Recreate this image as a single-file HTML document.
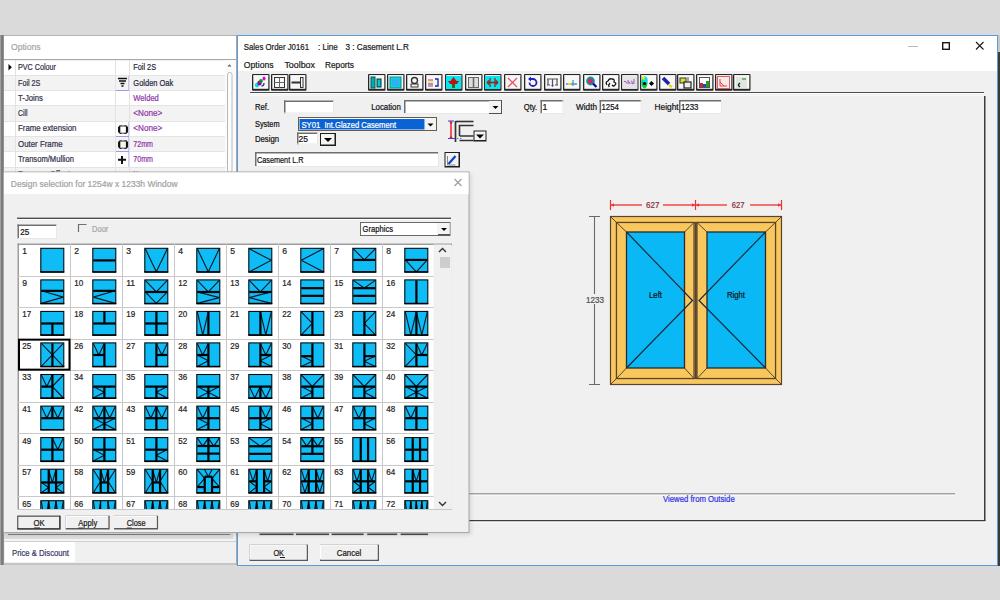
<!DOCTYPE html><html><head><meta charset="utf-8"><style>
html,body{margin:0;padding:0;width:1000px;height:600px;overflow:hidden;background:#dadada}
svg{display:block}
text{font-family:"Liberation Sans",sans-serif;white-space:pre}
</style></head><body>
<svg width="1000" height="600" viewBox="0 0 1000 600">
<defs><filter id="blur" x="-5%" y="-5%" width="110%" height="110%"><feGaussianBlur stdDeviation="2"/></filter></defs>
<rect x="0" y="0" width="1000" height="600" fill="#dadada" />
<rect x="0" y="35" width="237" height="530" fill="#f0f0f0" />
<rect x="0" y="35" width="4" height="530" fill="#a0a0a0" />
<rect x="1" y="35" width="2.5" height="530" fill="#7c7c7c" />
<rect x="4" y="35" width="233" height="1" fill="#b4b4b4" />
<rect x="4" y="36" width="232" height="24" fill="#ffffff" />
<text x="11" y="49.5" font-size="9" fill="#a6a6a6" stroke="#a6a6a6" stroke-width="0.22" textLength="29.5" lengthAdjust="spacingAndGlyphs" >Options</text>
<rect x="4" y="59" width="232" height="1" fill="#a8a8a8" />
<rect x="4" y="61" width="221" height="15" fill="#ffffff" />
<rect x="4" y="75" width="221" height="1" fill="#e4e4e4" />
<text x="18" y="70.2" font-size="8.7" fill="#33334a" stroke="#33334a" stroke-width="0.22" textLength="38" lengthAdjust="spacingAndGlyphs" >PVC Colour</text>
<text x="133.3" y="70.2" font-size="8.7" fill="#2b2b40" stroke="#2b2b40" stroke-width="0.22" textLength="22.7" lengthAdjust="spacingAndGlyphs" >Foil 2S</text>
<rect x="4" y="76" width="221" height="15" fill="#f3f3f3" />
<rect x="4" y="90" width="221" height="1" fill="#e4e4e4" />
<text x="18" y="85.5" font-size="8.7" fill="#33334a" stroke="#33334a" stroke-width="0.22" textLength="22.4" lengthAdjust="spacingAndGlyphs" >Foil 2S</text>
<text x="133.3" y="85.5" font-size="8.7" fill="#2b2b40" stroke="#2b2b40" stroke-width="0.22" textLength="40" lengthAdjust="spacingAndGlyphs" >Golden Oak</text>
<path d="M118 78.5h9M119 81h7M120.5 83.5h4M121.5 86h2" stroke="#111" stroke-width="1.5"/>
<rect x="128.5" y="76" width="1" height="15" fill="#9a9aee" />
<rect x="115" y="90" width="14" height="1" fill="#9a9aee" />
<rect x="4" y="91" width="221" height="15" fill="#ffffff" />
<rect x="4" y="105" width="221" height="1" fill="#e4e4e4" />
<text x="18" y="100.8" font-size="8.7" fill="#33334a" stroke="#33334a" stroke-width="0.22" textLength="25" lengthAdjust="spacingAndGlyphs" >T-Joins</text>
<text x="133.3" y="100.8" font-size="8.7" fill="#8f35a8" stroke="#8f35a8" stroke-width="0.22" textLength="25.5" lengthAdjust="spacingAndGlyphs" >Welded</text>
<rect x="4" y="106" width="221" height="15" fill="#f3f3f3" />
<rect x="4" y="121" width="221" height="1" fill="#e4e4e4" />
<text x="18" y="116.1" font-size="8.7" fill="#33334a" stroke="#33334a" stroke-width="0.22" textLength="9.5" lengthAdjust="spacingAndGlyphs" >Cill</text>
<text x="133.3" y="116.1" font-size="8.7" fill="#8f35a8" stroke="#8f35a8" stroke-width="0.22" textLength="29" lengthAdjust="spacingAndGlyphs" >&lt;None&gt;</text>
<rect x="4" y="122" width="221" height="15" fill="#ffffff" />
<rect x="4" y="136" width="221" height="1" fill="#e4e4e4" />
<text x="18" y="131.4" font-size="8.7" fill="#33334a" stroke="#33334a" stroke-width="0.22" textLength="58.4" lengthAdjust="spacingAndGlyphs" >Frame extension</text>
<text x="133.3" y="131.4" font-size="8.7" fill="#8f35a8" stroke="#8f35a8" stroke-width="0.22" textLength="29" lengthAdjust="spacingAndGlyphs" >&lt;None&gt;</text>
<rect x="119" y="125.8" width="8.2" height="7.6" rx="1.8" fill="none" stroke="#111" stroke-width="1.3"/><path d="M119.2 127v5.2M127 127v5.2" stroke="#111" stroke-width="2.2"/><path d="M121.5 125.8h3M121.5 133.4h3" stroke="#f4f4f4" stroke-width="0.6"/>
<rect x="128.5" y="122" width="1" height="15" fill="#9a9aee" />
<rect x="115" y="136" width="14" height="1" fill="#9a9aee" />
<rect x="4" y="137" width="221" height="15" fill="#f3f3f3" />
<rect x="4" y="151" width="221" height="1" fill="#e4e4e4" />
<text x="18" y="146.7" font-size="8.7" fill="#33334a" stroke="#33334a" stroke-width="0.22" textLength="44.7" lengthAdjust="spacingAndGlyphs" >Outer Frame</text>
<text x="133.3" y="146.7" font-size="8.7" fill="#8f35a8" stroke="#8f35a8" stroke-width="0.22" textLength="19.6" lengthAdjust="spacingAndGlyphs" >72mm</text>
<rect x="119" y="140.8" width="8.2" height="7.6" rx="1.8" fill="none" stroke="#111" stroke-width="1.3"/><path d="M119.2 142v5.2M127 142v5.2" stroke="#111" stroke-width="2.2"/><path d="M121.5 140.8h3M121.5 148.4h3" stroke="#f4f4f4" stroke-width="0.6"/>
<rect x="128.5" y="137" width="1" height="15" fill="#9a9aee" />
<rect x="115" y="151" width="14" height="1" fill="#9a9aee" />
<rect x="4" y="152" width="221" height="15" fill="#ffffff" />
<rect x="4" y="167" width="221" height="1" fill="#e4e4e4" />
<text x="18" y="162.0" font-size="8.7" fill="#33334a" stroke="#33334a" stroke-width="0.22" textLength="56" lengthAdjust="spacingAndGlyphs" >Transom/Mullion</text>
<text x="133.3" y="162.0" font-size="8.7" fill="#8f35a8" stroke="#8f35a8" stroke-width="0.22" textLength="19.6" lengthAdjust="spacingAndGlyphs" >70mm</text>
<path d="M122 156v8M118 159.8h8" stroke="#111" stroke-width="2"/>
<rect x="128.5" y="152" width="1" height="15" fill="#9a9aee" />
<rect x="4" y="168" width="221" height="15" fill="#f3f3f3" />
<rect x="4" y="182" width="221" height="1" fill="#e4e4e4" />
<text x="18" y="177.3" font-size="8.7" fill="#33334a" stroke="#33334a" stroke-width="0.22" textLength="52" lengthAdjust="spacingAndGlyphs" >Transom Offset</text>
<text x="133.3" y="177.3" font-size="8.7" fill="#8f35a8" stroke="#8f35a8" stroke-width="0.22" textLength="16" lengthAdjust="spacingAndGlyphs" >None</text>
<rect x="15" y="60" width="1" height="112" fill="#e2e2e2" />
<rect x="115" y="60" width="1" height="112" fill="#e2e2e2" />
<rect x="129" y="60" width="1" height="112" fill="#e2e2e2" />
<path d="M8.5 64L11.8 67.3L8.5 70.6Z" fill="#000"/>
<rect x="225" y="60" width="11" height="112" fill="#fbfbfb" />
<path d="M227.5 66.5h4l-2-2.2z" fill="#606060"/>
<rect x="227.5" y="72.5" width="4.5" height="100" rx="2.2" fill="#fdfdfd" stroke="#b8b8b8"/>
<rect x="4" y="533" width="229" height="9" fill="#dcdcdc" />
<rect x="8" y="534" width="222" height="1" fill="#808080" />
<rect x="4" y="539" width="229" height="2" fill="#f4f4f4" />
<rect x="4" y="541" width="233" height="1" fill="#d0d0d0" />
<rect x="5" y="542" width="70" height="20" fill="#ffffff" />
<text x="12" y="555.5" font-size="8.7" fill="#3a3a66" stroke="#3a3a66" stroke-width="0.22" textLength="57" lengthAdjust="spacingAndGlyphs" >Price &amp; Discount</text>
<rect x="4" y="563" width="233" height="2" fill="#c4c4c4" />
<rect x="236" y="35" width="1" height="530" fill="#a8a8a8" />
<rect x="237" y="35" width="761" height="531" fill="#5b9bd9" />
<rect x="238" y="36" width="759" height="529" fill="#f0f0f0" />
<rect x="238" y="36" width="759" height="35" fill="#ffffff" />
<text x="243.8" y="50" font-size="9.3" fill="#1a1a1a" stroke="#1a1a1a" stroke-width="0.22" textLength="65.2" lengthAdjust="spacingAndGlyphs" >Sales Order J0161</text>
<text x="318" y="50" font-size="9.3" fill="#1a1a1a" stroke="#1a1a1a" stroke-width="0.22" textLength="19.8" lengthAdjust="spacingAndGlyphs" >: Line</text>
<text x="345.4" y="50" font-size="9.3" fill="#1a1a1a" stroke="#1a1a1a" stroke-width="0.22" textLength="63.5" lengthAdjust="spacingAndGlyphs" >3 : Casement L.R</text>
<text x="243.8" y="68" font-size="9.3" fill="#1a1a1a" stroke="#1a1a1a" stroke-width="0.22" textLength="29.8" lengthAdjust="spacingAndGlyphs" >Options</text>
<text x="284.4" y="68" font-size="9.3" fill="#1a1a1a" stroke="#1a1a1a" stroke-width="0.22" textLength="30.6" lengthAdjust="spacingAndGlyphs" >Toolbox</text>
<text x="325" y="68" font-size="9.3" fill="#1a1a1a" stroke="#1a1a1a" stroke-width="0.22" textLength="29" lengthAdjust="spacingAndGlyphs" >Reports</text>
<rect x="908" y="46" width="10" height="1" fill="#b8b8b8" />
<rect x="942.7" y="42.7" width="6.6" height="6.6" fill="none" stroke="#1a1a1a" stroke-width="1.4"/>
<path d="M976 42L983.5 49.5M983.5 42L976 49.5" stroke="#1a1a1a" stroke-width="1.1"/>
<rect x="998" y="35" width="2" height="17" fill="#c8c8c8" />
<rect x="998" y="52" width="2" height="514" fill="#3a3a3a" />
<g transform="translate(252,74)"><rect x="0" y="0" width="17.5" height="16.8" rx="1" fill="#262626"/><rect x="1.3" y="1.3" width="15" height="13.5" fill="#f7f7f7"/><rect x="1.3" y="1.3" width="15" height="1" fill="#ffffff"/><ellipse cx="5" cy="11" rx="2.2" ry="2.6" fill="#00e0e0"/><ellipse cx="7.5" cy="9" rx="2.2" ry="2.6" fill="#a000a0"/><ellipse cx="9" cy="7" rx="1.8" ry="2" fill="#00a000"/><ellipse cx="12" cy="4.5" rx="1.5" ry="2" fill="#e000e0"/><path d="M12 9q0 3 -2.5 3" stroke="#6020c0" stroke-width="1.4" fill="none"/></g>
<g transform="translate(271,74)"><rect x="0" y="0" width="17.5" height="16.8" rx="1" fill="#262626"/><rect x="1.3" y="1.3" width="15" height="13.5" fill="#f7f7f7"/><rect x="1.3" y="1.3" width="15" height="1" fill="#ffffff"/><rect x="3.5" y="3.5" width="10" height="10" fill="none" stroke="#333"/><path d="M8.5 3.5v10M3.5 8.5h10" stroke="#666"/></g>
<g transform="translate(289,74)"><rect x="0" y="0" width="17.5" height="16.8" rx="1" fill="#262626"/><rect x="1.3" y="1.3" width="15" height="13.5" fill="#f7f7f7"/><rect x="1.3" y="1.3" width="15" height="1" fill="#ffffff"/><path d="M2.5 8.5h9" stroke="#333" stroke-width="2"/><rect x="11.5" y="3.5" width="2.5" height="10" fill="#fff" stroke="#333"/></g>
<g transform="translate(368,74)"><rect x="0" y="0" width="17.5" height="16.8" rx="1" fill="#262626"/><rect x="1.3" y="1.3" width="15" height="13.5" fill="#f7f7f7"/><rect x="1.3" y="1.3" width="15" height="1" fill="#ffffff"/><rect x="3" y="3" width="4" height="11" fill="#00b0b0" stroke="#055" stroke-width="1"/><rect x="9" y="5" width="4" height="8" fill="#00c8c8" stroke="#033"/></g>
<g transform="translate(387,74)"><rect x="0" y="0" width="17.5" height="16.8" rx="1" fill="#262626"/><rect x="1.3" y="1.3" width="15" height="13.5" fill="#f7f7f7"/><rect x="1.3" y="1.3" width="15" height="1" fill="#ffffff"/><rect x="3" y="3" width="11" height="11" fill="#10d0e0" stroke="#009090"/><rect x="5" y="5" width="7" height="7" fill="#30b0f0"/></g>
<g transform="translate(406,74)"><rect x="0" y="0" width="17.5" height="16.8" rx="1" fill="#262626"/><rect x="1.3" y="1.3" width="15" height="13.5" fill="#f7f7f7"/><rect x="1.3" y="1.3" width="15" height="1" fill="#ffffff"/><rect x="5.5" y="3.5" width="6" height="6" rx="3" fill="none" stroke="#333" stroke-width="1.4"/><rect x="5" y="10" width="7" height="3" fill="none" stroke="#333"/></g>
<g transform="translate(425,74)"><rect x="0" y="0" width="17.5" height="16.8" rx="1" fill="#262626"/><rect x="1.3" y="1.3" width="15" height="13.5" fill="#f7f7f7"/><rect x="1.3" y="1.3" width="15" height="1" fill="#ffffff"/><path d="M3 6h5" stroke="#e03030"/><path d="M3 8h5" stroke="#e0e000"/><path d="M3 10h5" stroke="#3030e0"/><path d="M3 12h5" stroke="#e03030"/><path d="M10 5h3v7h-3" stroke="#2020a0" fill="none" stroke-width="1.3"/></g>
<g transform="translate(445,74)"><rect x="0" y="0" width="17.5" height="16.8" rx="1" fill="#262626"/><rect x="1.3" y="1.3" width="15" height="13.5" fill="#f7f7f7"/><rect x="1.3" y="1.3" width="15" height="1" fill="#ffffff"/><rect x="1" y="2" width="15" height="13" fill="#00e8f0"/><path d="M8.5 3l3 4h2.5l-2 3h-2v3h-3v-3h-2l-2-3h2.5z" fill="#c01010"/><rect x="7" y="11" width="3" height="3" fill="#108010"/></g>
<g transform="translate(465,74)"><rect x="0" y="0" width="17.5" height="16.8" rx="1" fill="#262626"/><rect x="1.3" y="1.3" width="15" height="13.5" fill="#f7f7f7"/><rect x="1.3" y="1.3" width="15" height="1" fill="#ffffff"/><rect x="3.5" y="3.5" width="10" height="10" fill="#ddd" stroke="#666"/><path d="M8.5 3.5v10" stroke="#666" stroke-width="1.5"/></g>
<g transform="translate(484,74)"><rect x="0" y="0" width="17.5" height="16.8" rx="1" fill="#262626"/><rect x="1.3" y="1.3" width="15" height="13.5" fill="#f7f7f7"/><rect x="1.3" y="1.3" width="15" height="1" fill="#ffffff"/><rect x="1" y="2" width="15" height="13" fill="#00e8f0"/><path d="M6 4v9M11 4v9M3 8.5h11M3 8.5l2-2M3 8.5l2 2M14 8.5l-2-2M14 8.5l-2 2" stroke="#a02020" stroke-width="1.3" fill="none"/></g>
<g transform="translate(504,74)"><rect x="0" y="0" width="17.5" height="16.8" rx="1" fill="#262626"/><rect x="1.3" y="1.3" width="15" height="13.5" fill="#f7f7f7"/><rect x="1.3" y="1.3" width="15" height="1" fill="#ffffff"/><path d="M4 4l9 9M13 4l-9 9" stroke="#f05060" stroke-width="1.3"/></g>
<g transform="translate(524,74)"><rect x="0" y="0" width="17.5" height="16.8" rx="1" fill="#262626"/><rect x="1.3" y="1.3" width="15" height="13.5" fill="#f7f7f7"/><rect x="1.3" y="1.3" width="15" height="1" fill="#ffffff"/><path d="M6 5h3a3.5 3.5 0 1 1 -3.5 3.5" stroke="#2020c0" stroke-width="1.8" fill="none"/><path d="M4 5l3-2.5v5z" fill="#2020c0"/></g>
<g transform="translate(544,74)"><rect x="0" y="0" width="17.5" height="16.8" rx="1" fill="#262626"/><rect x="1.3" y="1.3" width="15" height="13.5" fill="#f7f7f7"/><rect x="1.3" y="1.3" width="15" height="1" fill="#ffffff"/><path d="M3 5h11M4 5v6M13 5v6M3 11h3M11 11h3M8.5 5v6" stroke="#555" stroke-width="1.2"/><path d="M7 11h3l-1.5 2z" fill="#3030e0"/></g>
<g transform="translate(563,74)"><rect x="0" y="0" width="17.5" height="16.8" rx="1" fill="#262626"/><rect x="1.3" y="1.3" width="15" height="13.5" fill="#f7f7f7"/><rect x="1.3" y="1.3" width="15" height="1" fill="#ffffff"/><path d="M3 10h11" stroke="#3070e0" stroke-width="1.2"/><path d="M10 6v6" stroke="#30a0a0" stroke-width="1.2"/><rect x="5" y="9" width="3" height="2" fill="#e0e000"/></g>
<g transform="translate(583,74)"><rect x="0" y="0" width="17.5" height="16.8" rx="1" fill="#262626"/><rect x="1.3" y="1.3" width="15" height="13.5" fill="#f7f7f7"/><rect x="1.3" y="1.3" width="15" height="1" fill="#ffffff"/><circle cx="7.5" cy="7" r="3.5" fill="#e02060" stroke="#00a0a0" stroke-width="1.8"/><path d="M10 9.5l3.5 3.5" stroke="#0000c0" stroke-width="2.2"/></g>
<g transform="translate(602,74)"><rect x="0" y="0" width="17.5" height="16.8" rx="1" fill="#262626"/><rect x="1.3" y="1.3" width="15" height="13.5" fill="#f7f7f7"/><rect x="1.3" y="1.3" width="15" height="1" fill="#ffffff"/><path d="M5 11q-2-3 1-4q1-3 4-2q3 0 2 3q3 1 1 3q-1 2-3 0M8 9q-2 2-1 4" fill="none" stroke="#111" stroke-width="1.3"/></g>
<g transform="translate(621,74)"><rect x="0" y="0" width="17.5" height="16.8" rx="1" fill="#262626"/><rect x="1.3" y="1.3" width="15" height="13.5" fill="#f7f7f7"/><rect x="1.3" y="1.3" width="15" height="1" fill="#ffffff"/><rect x="1.3" y="2.3" width="15" height="12.5" fill="#e4e4e4"/><path d="M3 8q1-2 2 0t1 1M7 6v4M7 8q2-1 2 2M10 7q2 0 1 2t2 0M13 5v5" stroke="#9a60b8" stroke-width="1" fill="none"/></g>
<g transform="translate(640,74)"><rect x="0" y="0" width="17.5" height="16.8" rx="1" fill="#262626"/><rect x="1.3" y="1.3" width="15" height="13.5" fill="#f7f7f7"/><rect x="1.3" y="1.3" width="15" height="1" fill="#ffffff"/><ellipse cx="4.5" cy="8.5" rx="3" ry="6" fill="#00d040"/><ellipse cx="5" cy="6" rx="2.6" ry="3.5" fill="#00e0f0"/><ellipse cx="3.5" cy="4" rx="1.6" ry="1.8" fill="#e8e800"/><circle cx="4.5" cy="9.5" r="1.6" fill="#000"/><path d="M11.5 7l2.5 2.5-2.5 2.5-2.5-2.5z" fill="#000"/></g>
<g transform="translate(659,74)"><rect x="0" y="0" width="17.5" height="16.8" rx="1" fill="#262626"/><rect x="1.3" y="1.3" width="15" height="13.5" fill="#f7f7f7"/><rect x="1.3" y="1.3" width="15" height="1" fill="#ffffff"/><path d="M4 4l6 6" stroke="#2020b0" stroke-width="3.5"/><path d="M10 11l3 2" stroke="#e0e000" stroke-width="2.5"/></g>
<g transform="translate(677,74)"><rect x="0" y="0" width="17.5" height="16.8" rx="1" fill="#262626"/><rect x="1.3" y="1.3" width="15" height="13.5" fill="#f7f7f7"/><rect x="1.3" y="1.3" width="15" height="1" fill="#ffffff"/><rect x="3" y="4" width="6" height="5" fill="#e0e020" stroke="#333"/><rect x="7" y="8" width="7" height="6" fill="#eee" stroke="#222" stroke-width="1.2"/><path d="M11 3v4" stroke="#555"/></g>
<g transform="translate(696,74)"><rect x="0" y="0" width="17.5" height="16.8" rx="1" fill="#262626"/><rect x="1.3" y="1.3" width="15" height="13.5" fill="#f7f7f7"/><rect x="1.3" y="1.3" width="15" height="1" fill="#ffffff"/><rect x="3.5" y="3.5" width="10" height="10" fill="#fff" stroke="#555"/><rect x="4" y="9" width="3" height="4" fill="#e02020"/><rect x="7" y="10" width="3" height="3" fill="#2040e0"/><rect x="10" y="7" width="3" height="6" fill="#20a020"/></g>
<g transform="translate(715,74)"><rect x="0" y="0" width="17.5" height="16.8" rx="1" fill="#262626"/><rect x="1.3" y="1.3" width="15" height="13.5" fill="#f7f7f7"/><rect x="1.3" y="1.3" width="15" height="1" fill="#ffffff"/><rect x="2.5" y="2.5" width="12" height="12" fill="#fbe8e8" stroke="#e06060"/><path d="M5 5v7h7M5 8l4 4" stroke="#e04040" fill="none"/></g>
<g transform="translate(733,74)"><rect x="0" y="0" width="17.5" height="16.8" rx="1" fill="#262626"/><rect x="1.3" y="1.3" width="15" height="13.5" fill="#f7f7f7"/><rect x="1.3" y="1.3" width="15" height="1" fill="#ffffff"/><rect x="3" y="3" width="11" height="11" fill="#dde8e0"/><path d="M9 5h4" stroke="#60a060" stroke-width="1.5"/><path d="M7 9q-3 2 0 4" stroke="#222" stroke-width="1.5" fill="none"/></g>
<rect x="250" y="92" width="734" height="1" fill="#4a4a4a" />
<rect x="250" y="93" width="734" height="1" fill="#ffffff" />
<rect x="250" y="95" width="734" height="1" fill="#f8f8f8" />
<rect x="984" y="96" width="1.5" height="425" fill="#3c3c3c" />
<rect x="250" y="520" width="735.5" height="1.5" fill="#3c3c3c" />
<rect x="250" y="521.5" width="736" height="1" fill="#ffffff" />
<rect x="250" y="493.5" width="705" height="1" fill="#555555" />
<rect x="250" y="494.5" width="705" height="1" fill="#ffffff" />
<text x="663.1" y="502.4" font-size="8.3" fill="#3434e8" stroke="#3434e8" stroke-width="0.22" textLength="71.6" lengthAdjust="spacingAndGlyphs" >Viewed from Outside</text>
<text x="255" y="110" font-size="8.7" fill="#111" stroke="#111" stroke-width="0.22" textLength="14" lengthAdjust="spacingAndGlyphs" >Ref.</text>
<rect x="284" y="100.5" width="50" height="13" fill="#ffffff" />
<rect x="284" y="100.5" width="50" height="1.5" fill="#6e6e6e" />
<rect x="284" y="100.5" width="1.5" height="13" fill="#6e6e6e" />
<rect x="333" y="100.5" width="1" height="13" fill="#e8e8e8" />
<rect x="284" y="112.5" width="50" height="1" fill="#e8e8e8" />
<text x="371.2" y="110" font-size="8.7" fill="#111" stroke="#111" stroke-width="0.22" textLength="29.6" lengthAdjust="spacingAndGlyphs" >Location</text>
<rect x="404" y="100" width="98" height="14" fill="#ffffff" />
<rect x="404" y="100" width="98" height="1.5" fill="#6e6e6e" />
<rect x="404" y="100" width="1.5" height="14" fill="#6e6e6e" />
<rect x="501" y="100" width="1" height="14" fill="#e8e8e8" />
<rect x="404" y="113" width="98" height="1" fill="#e8e8e8" />
<rect x="489" y="101" width="12" height="12" fill="#f4f4f4" />
<rect x="501" y="100" width="1" height="14" fill="#505050" />
<rect x="489" y="113" width="13" height="1" fill="#505050" />
<path d="M492.5 106h6l-3 3z" fill="#000"/>
<text x="523.7" y="110" font-size="8.7" fill="#111" stroke="#111" stroke-width="0.22" textLength="13.5" lengthAdjust="spacingAndGlyphs" >Qty.</text>
<rect x="540.5" y="100" width="23" height="14" fill="#ffffff" />
<rect x="540.5" y="100" width="23" height="1.5" fill="#6e6e6e" />
<rect x="540.5" y="100" width="1.5" height="14" fill="#6e6e6e" />
<rect x="562.5" y="100" width="1" height="14" fill="#e8e8e8" />
<rect x="540.5" y="113" width="23" height="1" fill="#e8e8e8" />
<text x="542.5" y="110" font-size="8.7" fill="#111" stroke="#111" stroke-width="0.22" >1</text>
<text x="576" y="110" font-size="8.7" fill="#111" stroke="#111" stroke-width="0.22" textLength="21" lengthAdjust="spacingAndGlyphs" >Width</text>
<rect x="599.6" y="100" width="42" height="14" fill="#ffffff" />
<rect x="599.6" y="100" width="42" height="1.5" fill="#6e6e6e" />
<rect x="599.6" y="100" width="1.5" height="14" fill="#6e6e6e" />
<rect x="640.6" y="100" width="1" height="14" fill="#e8e8e8" />
<rect x="599.6" y="113" width="42" height="1" fill="#e8e8e8" />
<text x="601.5" y="110" font-size="8.7" fill="#111" stroke="#111" stroke-width="0.22" textLength="17.5" lengthAdjust="spacingAndGlyphs" >1254</text>
<text x="654.6" y="110" font-size="8.7" fill="#111" stroke="#111" stroke-width="0.22" textLength="24" lengthAdjust="spacingAndGlyphs" >Height</text>
<rect x="679" y="100" width="43" height="14" fill="#ffffff" />
<rect x="679" y="100" width="43" height="1.5" fill="#6e6e6e" />
<rect x="679" y="100" width="1.5" height="14" fill="#6e6e6e" />
<rect x="721" y="100" width="1" height="14" fill="#e8e8e8" />
<rect x="679" y="113" width="43" height="1" fill="#e8e8e8" />
<text x="681" y="110" font-size="8.7" fill="#111" stroke="#111" stroke-width="0.22" textLength="17.5" lengthAdjust="spacingAndGlyphs" >1233</text>
<text x="255" y="127" font-size="8.7" fill="#111" stroke="#111" stroke-width="0.22" textLength="24.5" lengthAdjust="spacingAndGlyphs" >System</text>
<rect x="298" y="117" width="139" height="14" fill="#6a5a48" />
<rect x="299" y="118" width="137" height="12" fill="#ffffff" />
<rect x="299.5" y="119" width="125" height="10.5" fill="#0a63d4" />
<text x="301.5" y="127.8" font-size="8.7" fill="#ffffff" stroke="#ffffff" stroke-width="0.22" textLength="94.5" lengthAdjust="spacingAndGlyphs" >SY01&#160; Int.Glazed Casement</text>
<rect x="425" y="118" width="11" height="12" fill="#f4f4f4" />
<path d="M427.5 123.5h6l-3 3z" fill="#000"/>
<text x="255" y="141.5" font-size="8.7" fill="#111" stroke="#111" stroke-width="0.22" textLength="24" lengthAdjust="spacingAndGlyphs" >Design</text>
<rect x="297" y="132.5" width="21" height="12" fill="#ffffff" />
<rect x="297" y="132.5" width="21" height="1.5" fill="#6e6e6e" />
<rect x="297" y="132.5" width="1.5" height="12" fill="#6e6e6e" />
<rect x="317" y="132.5" width="1" height="12" fill="#e8e8e8" />
<rect x="297" y="143.5" width="21" height="1" fill="#e8e8e8" />
<text x="298.5" y="142" font-size="8.7" fill="#111" stroke="#111" stroke-width="0.22" textLength="9.5" lengthAdjust="spacingAndGlyphs" >25</text>
<g transform="translate(320,133)"><rect width="16" height="13" fill="#1e1e1e"/><rect x="1" y="1" width="13.5" height="10.5" fill="#f4f4f4"/><path d="M4 5h8l-4 4z" fill="#000"/></g>
<path d="M451 121.5v16.5" stroke="#f01818" stroke-width="1.4"/><circle cx="451" cy="122.5" r="1.2" fill="#f01818"/><circle cx="451" cy="137.5" r="1.2" fill="#f01818"/><path d="M448 121h6M448 138.5h6" stroke="#3a3aee" stroke-width="1"/><path d="M454 138.5h9" stroke="#6a6aee" stroke-dasharray="1.5 1.5"/><path d="M455.5 121v21" stroke="#333" stroke-width="1.7"/><path d="M455.5 121.5h18" stroke="#333" stroke-width="1.6"/><path d="M459.5 136v-10.5h14M459.5 136h14M459.5 140.5h14" stroke="#333" stroke-width="1.6" fill="none"/>
<g transform="translate(473.5,130.5)"><rect width="13" height="11" fill="#1e1e1e"/><rect x="1" y="1" width="11" height="8.5" fill="#f4f4f4"/><path d="M2.5 4h8l-4 4z" fill="#000"/></g>
<rect x="255" y="152" width="184" height="15" fill="#ffffff" />
<rect x="255" y="152" width="184" height="1.5" fill="#6e6e6e" />
<rect x="255" y="152" width="1.5" height="15" fill="#6e6e6e" />
<rect x="438" y="152" width="1" height="15" fill="#e8e8e8" />
<rect x="255" y="166" width="184" height="1" fill="#e8e8e8" />
<text x="257" y="163" font-size="8.7" fill="#111" stroke="#111" stroke-width="0.22" textLength="46.5" lengthAdjust="spacingAndGlyphs" >Casement L.R</text>
<g transform="translate(444.5,152)"><rect width="15.5" height="15.5" fill="#1e1e1e"/><rect x="1" y="1" width="13" height="13" fill="#f4f4f4"/><path d="M4 12l7-8" stroke="#1040d0" stroke-width="2.2"/><path d="M3 4v9h8" stroke="#888" fill="none"/></g>
<g>
<path d="M610.5 200v10M695.5 200v10M781.5 200v10" stroke="#f03030" stroke-width="1.2"/>
<path d="M611 205h31M663 205h32M696 205h31M750 205h31" stroke="#f04848" stroke-width="1.3"/>
<path d="M611 205l3-1.8v3.6zM695 205l-3-1.8v3.6zM696 205l3-1.8v3.6zM781 205l-3-1.8v3.6z" fill="#f03030"/>
<text x="646" y="208.2" font-size="8.7" fill="#8a3040" stroke="#8a3040" stroke-width="0.22" textLength="13.4" lengthAdjust="spacingAndGlyphs" >627</text>
<text x="731.8" y="208.2" font-size="8.7" fill="#8a3040" stroke="#8a3040" stroke-width="0.22" textLength="12.6" lengthAdjust="spacingAndGlyphs" >627</text>
<path d="M594.5 216.5v168M589 216.5h11M589 384.5h11" stroke="#6a6a6a" stroke-width="1.1"/>
<rect x="584" y="294" width="22" height="10" fill="#f0f0f0" />
<text x="586" y="303" font-size="8.7" fill="#505050" stroke="#505050" stroke-width="0.22" textLength="18" lengthAdjust="spacingAndGlyphs" >1233</text>
<rect x="610.5" y="216.5" width="171" height="168" fill="#f8c85e" stroke="#5a4430" stroke-width="1.2"/>
<rect x="616.5" y="222.5" width="159" height="156" fill="#f8c85e" stroke="#5a4430" stroke-width="1.2"/>
<path d="M610.5 216.5l6 6M781.5 216.5l-6 6M610.5 384.5l6-6M781.5 384.5l-6-6" stroke="#5a4430"/>
<rect x="616.5" y="222.5" width="77.5" height="156" fill="#f8c85e" stroke="#5a4430" stroke-width="1.2"/>
<rect x="626.5" y="232" width="58.0" height="136" fill="#0ab8f6" stroke="#2a2a2a" stroke-width="1.3"/>
<path d="M616.5 222.5L626.5 232M694 222.5L684.5 232M616.5 378.5L626.5 368M694 378.5L684.5 368" stroke="#5a4430"/>
<text x="649" y="298.4" font-size="8.7" fill="#111" stroke="#111" stroke-width="0.22" textLength="13" lengthAdjust="spacingAndGlyphs" >Left</text>
<rect x="697" y="222.5" width="78.5" height="156" fill="#f8c85e" stroke="#5a4430" stroke-width="1.2"/>
<rect x="707" y="232" width="58.5" height="136" fill="#0ab8f6" stroke="#2a2a2a" stroke-width="1.3"/>
<path d="M697 222.5L707 232M775.5 222.5L765.5 232M697 378.5L707 368M775.5 378.5L765.5 368" stroke="#5a4430"/>
<text x="727" y="298.4" font-size="8.7" fill="#111" stroke="#111" stroke-width="0.22" textLength="18" lengthAdjust="spacingAndGlyphs" >Right</text>
<path d="M626.5 232L692.5 300.5L626.5 368" stroke="#1a2a3a" stroke-width="1.2" fill="none"/>
<path d="M765.5 232L699 300.5L765.5 368" stroke="#1a2a3a" stroke-width="1.2" fill="none"/>
<rect x="694.6" y="222.5" width="2.2" height="156" fill="#5a4430" />
</g>
<rect x="249.6" y="544.6" width="58.4" height="16.4" fill="#5a5a5a" />
<rect x="249.6" y="544.6" width="56.9" height="14.899999999999999" fill="#ffffff" />
<rect x="250.6" y="545.6" width="55.9" height="13.899999999999999" fill="#f0f0f0" />
<text x="273.4" y="555.7" font-size="8.7" fill="#1a1a1a" stroke="#1a1a1a" stroke-width="0.22" textLength="10.6" lengthAdjust="spacingAndGlyphs" >OK</text>
<rect x="280" y="557" width="5" height="1" fill="#1a1a1a" />
<rect x="320" y="544.6" width="59" height="16.4" fill="#5a5a5a" />
<rect x="320" y="544.6" width="57.5" height="14.899999999999999" fill="#ffffff" />
<rect x="321" y="545.6" width="56.5" height="13.899999999999999" fill="#f0f0f0" />
<text x="336.8" y="555.7" font-size="8.7" fill="#1a1a1a" stroke="#1a1a1a" stroke-width="0.22" textLength="24.5" lengthAdjust="spacingAndGlyphs" >Cancel</text>
<rect x="259.5" y="533.5" width="34" height="1.6" fill="#4a4a4a" />
<rect x="296" y="533.5" width="33" height="1.6" fill="#4a4a4a" />
<rect x="331.6" y="533.5" width="32" height="1.6" fill="#4a4a4a" />
<rect x="367.2" y="533.5" width="30" height="1.6" fill="#4a4a4a" />
<rect x="400.6" y="533.5" width="27.5" height="1.6" fill="#4a4a4a" />
<rect x="5" y="174" width="466" height="361" fill="rgba(0,0,0,0.12)" filter="url(#blur)"/>
<rect x="3" y="171.5" width="466.5" height="361.5" fill="#a8a8a8" />
<rect x="4" y="172.5" width="464.5" height="359.5" fill="#f0f0f0" />
<rect x="4" y="172.5" width="464.5" height="21.5" fill="#ffffff" />
<text x="10.8" y="187.3" font-size="9.2" fill="#a2a2a2" stroke="#a2a2a2" stroke-width="0.22" textLength="166.8" lengthAdjust="spacingAndGlyphs" >Design selection for 1254w x 1233h Window</text>
<path d="M454.5 179L461.5 186M461.5 179L454.5 186" stroke="#a0a0a0" stroke-width="1.3"/>
<rect x="17" y="217.6" width="434" height="1.4" fill="#505050" />
<rect x="17" y="219" width="434" height="1" fill="#ffffff" />
<rect x="17.5" y="224.5" width="39.5" height="14.5" fill="#ffffff" />
<rect x="17.5" y="224.5" width="39.5" height="1.5" fill="#6e6e6e" />
<rect x="17.5" y="224.5" width="1.5" height="14.5" fill="#6e6e6e" />
<rect x="56.0" y="224.5" width="1" height="14.5" fill="#e8e8e8" />
<rect x="17.5" y="238.0" width="39.5" height="1" fill="#e8e8e8" />
<text x="20.2" y="234.6" font-size="8.7" fill="#111" stroke="#111" stroke-width="0.22" textLength="9" lengthAdjust="spacingAndGlyphs" >25</text>
<path d="M78.5 232V224.5H86.5" stroke="#707070" fill="none" stroke-width="1.2"/>
<text x="92" y="231.8" font-size="8.7" fill="#a6a6a6" stroke="#a6a6a6" stroke-width="0.22" textLength="16.4" lengthAdjust="spacingAndGlyphs" >Door</text>
<rect x="360" y="222" width="90.5" height="14" fill="#6a6a6a" />
<rect x="361" y="223" width="88.5" height="12" fill="#ffffff" />
<rect x="437" y="223" width="12.5" height="12" fill="#f4f4f4" />
<rect x="438" y="234" width="12" height="1.5" fill="#555" />
<path d="M441 228h6l-3 3z" fill="#000"/>
<text x="362.6" y="232.2" font-size="8.7" fill="#111" stroke="#111" stroke-width="0.22" textLength="30.4" lengthAdjust="spacingAndGlyphs" >Graphics</text>
<clipPath id="gclip"><rect x="17.5" y="243.5" width="434.5" height="266"/></clipPath><g clip-path="url(#gclip)">
<rect x="17.5" y="243.5" width="434.5" height="266" fill="#d8d8d8" />
<rect x="17.3" y="243.3" width="434.7" height="1.6" fill="#8a8a8a" />
<rect x="17.3" y="243.3" width="1.6" height="266.2" fill="#8a8a8a" />
<rect x="18.9" y="244.9" width="432.6" height="264.6" fill="#ffffff" />
<text x="22.2" y="254.2" font-size="9.2" fill="#1e1e1e" stroke="#1e1e1e" stroke-width="0.22" textLength="4.8" lengthAdjust="spacingAndGlyphs" >1</text>
<g transform="translate(40.3,247.8)"><rect x="0.5" y="0.5" width="23" height="23.5" fill="#0ebdf6" stroke="#000" stroke-width="1.05"/><rect x="0" y="23.5" width="24" height="1.5" fill="#000"/></g>
<text x="74.2" y="254.2" font-size="9.2" fill="#1e1e1e" stroke="#1e1e1e" stroke-width="0.22" textLength="4.8" lengthAdjust="spacingAndGlyphs" >2</text>
<g transform="translate(92.3,247.8)"><rect x="0.5" y="0.5" width="23" height="23.5" fill="#0ebdf6" stroke="#000" stroke-width="1.05"/><rect x="1.00" y="11.50" width="22.00" height="2.2" fill="#000"/><rect x="0" y="23.5" width="24" height="1.5" fill="#000"/></g>
<text x="126.2" y="254.2" font-size="9.2" fill="#1e1e1e" stroke="#1e1e1e" stroke-width="0.22" textLength="4.8" lengthAdjust="spacingAndGlyphs" >3</text>
<g transform="translate(144.3,247.8)"><rect x="0.5" y="0.5" width="23" height="23.5" fill="#0ebdf6" stroke="#000" stroke-width="1.05"/><path d="M1.00 1.00L12.00 24.00M23.00 1.00L12.00 24.00" stroke="#0a1a2a" stroke-width="1.15" fill="none"/><rect x="0" y="23.5" width="24" height="1.5" fill="#000"/></g>
<text x="178.2" y="254.2" font-size="9.2" fill="#1e1e1e" stroke="#1e1e1e" stroke-width="0.22" textLength="4.8" lengthAdjust="spacingAndGlyphs" >4</text>
<g transform="translate(196.3,247.8)"><rect x="0.5" y="0.5" width="23" height="23.5" fill="#0ebdf6" stroke="#000" stroke-width="1.05"/><path d="M1.00 1.00L12.00 24.00M23.00 1.00L12.00 24.00" stroke="#0a1a2a" stroke-width="1.15" fill="none"/><rect x="0" y="23.5" width="24" height="1.5" fill="#000"/></g>
<text x="230.2" y="254.2" font-size="9.2" fill="#1e1e1e" stroke="#1e1e1e" stroke-width="0.22" textLength="4.8" lengthAdjust="spacingAndGlyphs" >5</text>
<g transform="translate(248.3,247.8)"><rect x="0.5" y="0.5" width="23" height="23.5" fill="#0ebdf6" stroke="#000" stroke-width="1.05"/><path d="M1.00 1.00L23.00 12.50M1.00 24.00L23.00 12.50" stroke="#0a1a2a" stroke-width="1.15" fill="none"/><rect x="0" y="23.5" width="24" height="1.5" fill="#000"/></g>
<text x="282.2" y="254.2" font-size="9.2" fill="#1e1e1e" stroke="#1e1e1e" stroke-width="0.22" textLength="4.8" lengthAdjust="spacingAndGlyphs" >6</text>
<g transform="translate(300.3,247.8)"><rect x="0.5" y="0.5" width="23" height="23.5" fill="#0ebdf6" stroke="#000" stroke-width="1.05"/><path d="M23.00 1.00L1.00 12.50M23.00 24.00L1.00 12.50" stroke="#0a1a2a" stroke-width="1.15" fill="none"/><rect x="0" y="23.5" width="24" height="1.5" fill="#000"/></g>
<text x="334.2" y="254.2" font-size="9.2" fill="#1e1e1e" stroke="#1e1e1e" stroke-width="0.22" textLength="4.8" lengthAdjust="spacingAndGlyphs" >7</text>
<g transform="translate(352.3,247.8)"><rect x="0.5" y="0.5" width="23" height="23.5" fill="#0ebdf6" stroke="#000" stroke-width="1.05"/><path d="M1.00 1.00L12.00 12.04M23.00 1.00L12.00 12.04" stroke="#0a1a2a" stroke-width="1.15" fill="none"/><rect x="1.00" y="11.04" width="22.00" height="2.2" fill="#000"/><rect x="0" y="23.5" width="24" height="1.5" fill="#000"/></g>
<text x="386.2" y="254.2" font-size="9.2" fill="#1e1e1e" stroke="#1e1e1e" stroke-width="0.22" textLength="4.8" lengthAdjust="spacingAndGlyphs" >8</text>
<g transform="translate(404.3,247.8)"><rect x="0.5" y="0.5" width="23" height="23.5" fill="#0ebdf6" stroke="#000" stroke-width="1.05"/><path d="M1.00 12.04L12.00 24.00M23.00 12.04L12.00 24.00" stroke="#0a1a2a" stroke-width="1.15" fill="none"/><rect x="1.00" y="11.04" width="22.00" height="2.2" fill="#000"/><rect x="0" y="23.5" width="24" height="1.5" fill="#000"/></g>
<text x="22.2" y="285.8" font-size="9.2" fill="#1e1e1e" stroke="#1e1e1e" stroke-width="0.22" textLength="4.8" lengthAdjust="spacingAndGlyphs" >9</text>
<g transform="translate(40.3,279.4)"><rect x="0.5" y="0.5" width="23" height="23.5" fill="#0ebdf6" stroke="#000" stroke-width="1.05"/><path d="M1.00 11.35L23.00 17.68M1.00 24.00L23.00 17.68" stroke="#0a1a2a" stroke-width="1.15" fill="none"/><rect x="1.00" y="10.35" width="22.00" height="2.2" fill="#000"/><rect x="0" y="23.5" width="24" height="1.5" fill="#000"/></g>
<text x="74.2" y="285.8" font-size="9.2" fill="#1e1e1e" stroke="#1e1e1e" stroke-width="0.22" textLength="9.0" lengthAdjust="spacingAndGlyphs" >10</text>
<g transform="translate(92.3,279.4)"><rect x="0.5" y="0.5" width="23" height="23.5" fill="#0ebdf6" stroke="#000" stroke-width="1.05"/><path d="M23.00 11.35L1.00 17.68M23.00 24.00L1.00 17.68" stroke="#0a1a2a" stroke-width="1.15" fill="none"/><rect x="1.00" y="10.35" width="22.00" height="2.2" fill="#000"/><rect x="0" y="23.5" width="24" height="1.5" fill="#000"/></g>
<text x="126.2" y="285.8" font-size="9.2" fill="#1e1e1e" stroke="#1e1e1e" stroke-width="0.22" textLength="9.0" lengthAdjust="spacingAndGlyphs" >11</text>
<g transform="translate(144.3,279.4)"><rect x="0.5" y="0.5" width="23" height="23.5" fill="#0ebdf6" stroke="#000" stroke-width="1.05"/><path d="M1.00 1.00L12.00 12.50M23.00 1.00L12.00 12.50M1.00 12.50L12.00 24.00M23.00 12.50L12.00 24.00" stroke="#0a1a2a" stroke-width="1.15" fill="none"/><rect x="1.00" y="11.50" width="22.00" height="2.2" fill="#000"/><rect x="0" y="23.5" width="24" height="1.5" fill="#000"/></g>
<text x="178.2" y="285.8" font-size="9.2" fill="#1e1e1e" stroke="#1e1e1e" stroke-width="0.22" textLength="9.0" lengthAdjust="spacingAndGlyphs" >12</text>
<g transform="translate(196.3,279.4)"><rect x="0.5" y="0.5" width="23" height="23.5" fill="#0ebdf6" stroke="#000" stroke-width="1.05"/><path d="M1.00 1.00L12.00 12.50M23.00 1.00L12.00 12.50M1.00 12.50L23.00 18.25M1.00 24.00L23.00 18.25" stroke="#0a1a2a" stroke-width="1.15" fill="none"/><rect x="1.00" y="11.50" width="22.00" height="2.2" fill="#000"/><rect x="0" y="23.5" width="24" height="1.5" fill="#000"/></g>
<text x="230.2" y="285.8" font-size="9.2" fill="#1e1e1e" stroke="#1e1e1e" stroke-width="0.22" textLength="9.0" lengthAdjust="spacingAndGlyphs" >13</text>
<g transform="translate(248.3,279.4)"><rect x="0.5" y="0.5" width="23" height="23.5" fill="#0ebdf6" stroke="#000" stroke-width="1.05"/><path d="M1.00 1.00L12.00 12.50M23.00 1.00L12.00 12.50M23.00 12.50L1.00 18.25M23.00 24.00L1.00 18.25" stroke="#0a1a2a" stroke-width="1.15" fill="none"/><rect x="1.00" y="11.50" width="22.00" height="2.2" fill="#000"/><rect x="0" y="23.5" width="24" height="1.5" fill="#000"/></g>
<text x="282.2" y="285.8" font-size="9.2" fill="#1e1e1e" stroke="#1e1e1e" stroke-width="0.22" textLength="9.0" lengthAdjust="spacingAndGlyphs" >14</text>
<g transform="translate(300.3,279.4)"><rect x="0.5" y="0.5" width="23" height="23.5" fill="#0ebdf6" stroke="#000" stroke-width="1.05"/><rect x="1.00" y="7.67" width="22.00" height="2.2" fill="#000"/><rect x="1.00" y="15.33" width="22.00" height="2.2" fill="#000"/><rect x="0" y="23.5" width="24" height="1.5" fill="#000"/></g>
<text x="334.2" y="285.8" font-size="9.2" fill="#1e1e1e" stroke="#1e1e1e" stroke-width="0.22" textLength="9.0" lengthAdjust="spacingAndGlyphs" >15</text>
<g transform="translate(352.3,279.4)"><rect x="0.5" y="0.5" width="23" height="23.5" fill="#0ebdf6" stroke="#000" stroke-width="1.05"/><path d="M1.00 1.00L12.00 8.67M23.00 1.00L12.00 8.67" stroke="#0a1a2a" stroke-width="1.15" fill="none"/><rect x="1.00" y="7.67" width="22.00" height="2.2" fill="#000"/><rect x="1.00" y="15.33" width="22.00" height="2.2" fill="#000"/><rect x="0" y="23.5" width="24" height="1.5" fill="#000"/></g>
<text x="386.2" y="285.8" font-size="9.2" fill="#1e1e1e" stroke="#1e1e1e" stroke-width="0.22" textLength="9.0" lengthAdjust="spacingAndGlyphs" >16</text>
<g transform="translate(404.3,279.4)"><rect x="0.5" y="0.5" width="23" height="23.5" fill="#0ebdf6" stroke="#000" stroke-width="1.05"/><rect x="11.00" y="1.00" width="2.2" height="23.00" fill="#000"/><rect x="0" y="23.5" width="24" height="1.5" fill="#000"/></g>
<text x="22.2" y="317.3" font-size="9.2" fill="#1e1e1e" stroke="#1e1e1e" stroke-width="0.22" textLength="9.0" lengthAdjust="spacingAndGlyphs" >17</text>
<g transform="translate(40.3,310.9)"><rect x="0.5" y="0.5" width="23" height="23.5" fill="#0ebdf6" stroke="#000" stroke-width="1.05"/><rect x="1.00" y="11.50" width="22.00" height="2.2" fill="#000"/><rect x="11.00" y="12.50" width="2.2" height="11.50" fill="#000"/><rect x="0" y="23.5" width="24" height="1.5" fill="#000"/></g>
<text x="74.2" y="317.3" font-size="9.2" fill="#1e1e1e" stroke="#1e1e1e" stroke-width="0.22" textLength="9.0" lengthAdjust="spacingAndGlyphs" >18</text>
<g transform="translate(92.3,310.9)"><rect x="0.5" y="0.5" width="23" height="23.5" fill="#0ebdf6" stroke="#000" stroke-width="1.05"/><rect x="1.00" y="11.50" width="22.00" height="2.2" fill="#000"/><rect x="11.00" y="1.00" width="2.2" height="11.50" fill="#000"/><rect x="0" y="23.5" width="24" height="1.5" fill="#000"/></g>
<text x="126.2" y="317.3" font-size="9.2" fill="#1e1e1e" stroke="#1e1e1e" stroke-width="0.22" textLength="9.0" lengthAdjust="spacingAndGlyphs" >19</text>
<g transform="translate(144.3,310.9)"><rect x="0.5" y="0.5" width="23" height="23.5" fill="#0ebdf6" stroke="#000" stroke-width="1.05"/><rect x="1.00" y="11.50" width="22.00" height="2.2" fill="#000"/><rect x="11.00" y="1.00" width="2.2" height="23.00" fill="#000"/><rect x="0" y="23.5" width="24" height="1.5" fill="#000"/></g>
<text x="178.2" y="317.3" font-size="9.2" fill="#1e1e1e" stroke="#1e1e1e" stroke-width="0.22" textLength="9.0" lengthAdjust="spacingAndGlyphs" >20</text>
<g transform="translate(196.3,310.9)"><rect x="0.5" y="0.5" width="23" height="23.5" fill="#0ebdf6" stroke="#000" stroke-width="1.05"/><path d="M1.00 1.00L6.50 24.00M12.00 1.00L6.50 24.00" stroke="#0a1a2a" stroke-width="1.15" fill="none"/><rect x="11.00" y="1.00" width="2.2" height="23.00" fill="#000"/><rect x="0" y="23.5" width="24" height="1.5" fill="#000"/></g>
<text x="230.2" y="317.3" font-size="9.2" fill="#1e1e1e" stroke="#1e1e1e" stroke-width="0.22" textLength="9.0" lengthAdjust="spacingAndGlyphs" >21</text>
<g transform="translate(248.3,310.9)"><rect x="0.5" y="0.5" width="23" height="23.5" fill="#0ebdf6" stroke="#000" stroke-width="1.05"/><path d="M12.00 1.00L17.50 24.00M23.00 1.00L17.50 24.00" stroke="#0a1a2a" stroke-width="1.15" fill="none"/><rect x="11.00" y="1.00" width="2.2" height="23.00" fill="#000"/><rect x="0" y="23.5" width="24" height="1.5" fill="#000"/></g>
<text x="282.2" y="317.3" font-size="9.2" fill="#1e1e1e" stroke="#1e1e1e" stroke-width="0.22" textLength="9.0" lengthAdjust="spacingAndGlyphs" >22</text>
<g transform="translate(300.3,310.9)"><rect x="0.5" y="0.5" width="23" height="23.5" fill="#0ebdf6" stroke="#000" stroke-width="1.05"/><path d="M1.00 1.00L12.00 12.50M1.00 24.00L12.00 12.50" stroke="#0a1a2a" stroke-width="1.15" fill="none"/><rect x="11.00" y="1.00" width="2.2" height="23.00" fill="#000"/><rect x="0" y="23.5" width="24" height="1.5" fill="#000"/></g>
<text x="334.2" y="317.3" font-size="9.2" fill="#1e1e1e" stroke="#1e1e1e" stroke-width="0.22" textLength="9.0" lengthAdjust="spacingAndGlyphs" >23</text>
<g transform="translate(352.3,310.9)"><rect x="0.5" y="0.5" width="23" height="23.5" fill="#0ebdf6" stroke="#000" stroke-width="1.05"/><path d="M23.00 1.00L12.00 12.50M23.00 24.00L12.00 12.50" stroke="#0a1a2a" stroke-width="1.15" fill="none"/><rect x="11.00" y="1.00" width="2.2" height="23.00" fill="#000"/><rect x="0" y="23.5" width="24" height="1.5" fill="#000"/></g>
<text x="386.2" y="317.3" font-size="9.2" fill="#1e1e1e" stroke="#1e1e1e" stroke-width="0.22" textLength="9.0" lengthAdjust="spacingAndGlyphs" >24</text>
<g transform="translate(404.3,310.9)"><rect x="0.5" y="0.5" width="23" height="23.5" fill="#0ebdf6" stroke="#000" stroke-width="1.05"/><path d="M1.00 1.00L6.50 24.00M12.00 1.00L6.50 24.00M12.00 1.00L17.50 24.00M23.00 1.00L17.50 24.00" stroke="#0a1a2a" stroke-width="1.15" fill="none"/><rect x="11.00" y="1.00" width="2.2" height="23.00" fill="#000"/><rect x="0" y="23.5" width="24" height="1.5" fill="#000"/></g>
<text x="22.2" y="348.8" font-size="9.2" fill="#1e1e1e" stroke="#1e1e1e" stroke-width="0.22" textLength="9.0" lengthAdjust="spacingAndGlyphs" >25</text>
<g transform="translate(40.3,342.4)"><rect x="0.5" y="0.5" width="23" height="23.5" fill="#0ebdf6" stroke="#000" stroke-width="1.05"/><path d="M1.00 1.00L12.00 12.50M1.00 24.00L12.00 12.50M23.00 1.00L12.00 12.50M23.00 24.00L12.00 12.50" stroke="#0a1a2a" stroke-width="1.15" fill="none"/><rect x="11.00" y="1.00" width="2.2" height="23.00" fill="#000"/><rect x="0" y="23.5" width="24" height="1.5" fill="#000"/></g>
<text x="74.2" y="348.8" font-size="9.2" fill="#1e1e1e" stroke="#1e1e1e" stroke-width="0.22" textLength="9.0" lengthAdjust="spacingAndGlyphs" >26</text>
<g transform="translate(92.3,342.4)"><rect x="0.5" y="0.5" width="23" height="23.5" fill="#0ebdf6" stroke="#000" stroke-width="1.05"/><path d="M1.00 1.00L6.50 12.50M12.00 1.00L6.50 12.50" stroke="#0a1a2a" stroke-width="1.15" fill="none"/><rect x="11.00" y="1.00" width="2.2" height="23.00" fill="#000"/><rect x="1.00" y="11.50" width="11.00" height="2.2" fill="#000"/><rect x="0" y="23.5" width="24" height="1.5" fill="#000"/></g>
<text x="126.2" y="348.8" font-size="9.2" fill="#1e1e1e" stroke="#1e1e1e" stroke-width="0.22" textLength="9.0" lengthAdjust="spacingAndGlyphs" >27</text>
<g transform="translate(144.3,342.4)"><rect x="0.5" y="0.5" width="23" height="23.5" fill="#0ebdf6" stroke="#000" stroke-width="1.05"/><path d="M12.00 1.00L17.50 12.50M23.00 1.00L17.50 12.50" stroke="#0a1a2a" stroke-width="1.15" fill="none"/><rect x="11.00" y="1.00" width="2.2" height="23.00" fill="#000"/><rect x="12.00" y="11.50" width="11.00" height="2.2" fill="#000"/><rect x="0" y="23.5" width="24" height="1.5" fill="#000"/></g>
<text x="178.2" y="348.8" font-size="9.2" fill="#1e1e1e" stroke="#1e1e1e" stroke-width="0.22" textLength="9.0" lengthAdjust="spacingAndGlyphs" >28</text>
<g transform="translate(196.3,342.4)"><rect x="0.5" y="0.5" width="23" height="23.5" fill="#0ebdf6" stroke="#000" stroke-width="1.05"/><path d="M1.00 1.00L6.50 12.50M12.00 1.00L6.50 12.50M1.00 12.50L12.00 18.25M1.00 24.00L12.00 18.25" stroke="#0a1a2a" stroke-width="1.15" fill="none"/><rect x="11.00" y="1.00" width="2.2" height="23.00" fill="#000"/><rect x="1.00" y="11.50" width="11.00" height="2.2" fill="#000"/><rect x="0" y="23.5" width="24" height="1.5" fill="#000"/></g>
<text x="230.2" y="348.8" font-size="9.2" fill="#1e1e1e" stroke="#1e1e1e" stroke-width="0.22" textLength="9.0" lengthAdjust="spacingAndGlyphs" >29</text>
<g transform="translate(248.3,342.4)"><rect x="0.5" y="0.5" width="23" height="23.5" fill="#0ebdf6" stroke="#000" stroke-width="1.05"/><path d="M12.00 1.00L17.50 12.50M23.00 1.00L17.50 12.50M23.00 12.50L12.00 18.25M23.00 24.00L12.00 18.25" stroke="#0a1a2a" stroke-width="1.15" fill="none"/><rect x="11.00" y="1.00" width="2.2" height="23.00" fill="#000"/><rect x="12.00" y="11.50" width="11.00" height="2.2" fill="#000"/><rect x="0" y="23.5" width="24" height="1.5" fill="#000"/></g>
<text x="282.2" y="348.8" font-size="9.2" fill="#1e1e1e" stroke="#1e1e1e" stroke-width="0.22" textLength="9.0" lengthAdjust="spacingAndGlyphs" >30</text>
<g transform="translate(300.3,342.4)"><rect x="0.5" y="0.5" width="23" height="23.5" fill="#0ebdf6" stroke="#000" stroke-width="1.05"/><path d="M1.00 13.65L12.00 18.82M1.00 24.00L12.00 18.82" stroke="#0a1a2a" stroke-width="1.15" fill="none"/><rect x="11.00" y="1.00" width="2.2" height="23.00" fill="#000"/><rect x="1.00" y="12.65" width="11.00" height="2.2" fill="#000"/><rect x="0" y="23.5" width="24" height="1.5" fill="#000"/></g>
<text x="334.2" y="348.8" font-size="9.2" fill="#1e1e1e" stroke="#1e1e1e" stroke-width="0.22" textLength="9.0" lengthAdjust="spacingAndGlyphs" >31</text>
<g transform="translate(352.3,342.4)"><rect x="0.5" y="0.5" width="23" height="23.5" fill="#0ebdf6" stroke="#000" stroke-width="1.05"/><path d="M23.00 13.65L12.00 18.82M23.00 24.00L12.00 18.82" stroke="#0a1a2a" stroke-width="1.15" fill="none"/><rect x="11.00" y="1.00" width="2.2" height="23.00" fill="#000"/><rect x="12.00" y="12.65" width="11.00" height="2.2" fill="#000"/><rect x="0" y="23.5" width="24" height="1.5" fill="#000"/></g>
<text x="386.2" y="348.8" font-size="9.2" fill="#1e1e1e" stroke="#1e1e1e" stroke-width="0.22" textLength="9.0" lengthAdjust="spacingAndGlyphs" >32</text>
<g transform="translate(404.3,342.4)"><rect x="0.5" y="0.5" width="23" height="23.5" fill="#0ebdf6" stroke="#000" stroke-width="1.05"/><path d="M1.00 1.00L12.00 12.50M1.00 24.00L12.00 12.50M12.00 1.00L17.50 12.50M23.00 1.00L17.50 12.50" stroke="#0a1a2a" stroke-width="1.15" fill="none"/><rect x="11.00" y="1.00" width="2.2" height="23.00" fill="#000"/><rect x="12.00" y="11.50" width="11.00" height="2.2" fill="#000"/><rect x="0" y="23.5" width="24" height="1.5" fill="#000"/></g>
<text x="22.2" y="380.4" font-size="9.2" fill="#1e1e1e" stroke="#1e1e1e" stroke-width="0.22" textLength="9.0" lengthAdjust="spacingAndGlyphs" >33</text>
<g transform="translate(40.3,374.0)"><rect x="0.5" y="0.5" width="23" height="23.5" fill="#0ebdf6" stroke="#000" stroke-width="1.05"/><path d="M1.00 1.00L6.50 12.50M12.00 1.00L6.50 12.50M23.00 1.00L12.00 12.50M23.00 24.00L12.00 12.50" stroke="#0a1a2a" stroke-width="1.15" fill="none"/><rect x="11.00" y="1.00" width="2.2" height="23.00" fill="#000"/><rect x="1.00" y="11.50" width="11.00" height="2.2" fill="#000"/><rect x="0" y="23.5" width="24" height="1.5" fill="#000"/></g>
<text x="74.2" y="380.4" font-size="9.2" fill="#1e1e1e" stroke="#1e1e1e" stroke-width="0.22" textLength="9.0" lengthAdjust="spacingAndGlyphs" >34</text>
<g transform="translate(92.3,374.0)"><rect x="0.5" y="0.5" width="23" height="23.5" fill="#0ebdf6" stroke="#000" stroke-width="1.05"/><path d="M1.00 12.50L12.00 18.25M1.00 24.00L12.00 18.25" stroke="#0a1a2a" stroke-width="1.15" fill="none"/><rect x="1.00" y="11.50" width="22.00" height="2.2" fill="#000"/><rect x="11.00" y="12.50" width="2.2" height="11.50" fill="#000"/><rect x="0" y="23.5" width="24" height="1.5" fill="#000"/></g>
<text x="126.2" y="380.4" font-size="9.2" fill="#1e1e1e" stroke="#1e1e1e" stroke-width="0.22" textLength="9.0" lengthAdjust="spacingAndGlyphs" >35</text>
<g transform="translate(144.3,374.0)"><rect x="0.5" y="0.5" width="23" height="23.5" fill="#0ebdf6" stroke="#000" stroke-width="1.05"/><path d="M23.00 12.50L12.00 18.25M23.00 24.00L12.00 18.25" stroke="#0a1a2a" stroke-width="1.15" fill="none"/><rect x="1.00" y="11.50" width="22.00" height="2.2" fill="#000"/><rect x="11.00" y="12.50" width="2.2" height="11.50" fill="#000"/><rect x="0" y="23.5" width="24" height="1.5" fill="#000"/></g>
<text x="178.2" y="380.4" font-size="9.2" fill="#1e1e1e" stroke="#1e1e1e" stroke-width="0.22" textLength="9.0" lengthAdjust="spacingAndGlyphs" >36</text>
<g transform="translate(196.3,374.0)"><rect x="0.5" y="0.5" width="23" height="23.5" fill="#0ebdf6" stroke="#000" stroke-width="1.05"/><path d="M1.00 12.50L12.00 18.25M1.00 24.00L12.00 18.25M23.00 12.50L12.00 18.25M23.00 24.00L12.00 18.25" stroke="#0a1a2a" stroke-width="1.15" fill="none"/><rect x="1.00" y="11.50" width="22.00" height="2.2" fill="#000"/><rect x="11.00" y="12.50" width="2.2" height="11.50" fill="#000"/><rect x="0" y="23.5" width="24" height="1.5" fill="#000"/></g>
<text x="230.2" y="380.4" font-size="9.2" fill="#1e1e1e" stroke="#1e1e1e" stroke-width="0.22" textLength="9.0" lengthAdjust="spacingAndGlyphs" >37</text>
<g transform="translate(248.3,374.0)"><rect x="0.5" y="0.5" width="23" height="23.5" fill="#0ebdf6" stroke="#000" stroke-width="1.05"/><path d="M1.00 12.50L6.50 24.00M12.00 12.50L6.50 24.00M12.00 12.50L17.50 24.00M23.00 12.50L17.50 24.00" stroke="#0a1a2a" stroke-width="1.15" fill="none"/><rect x="1.00" y="11.50" width="22.00" height="2.2" fill="#000"/><rect x="11.00" y="12.50" width="2.2" height="11.50" fill="#000"/><rect x="0" y="23.5" width="24" height="1.5" fill="#000"/></g>
<text x="282.2" y="380.4" font-size="9.2" fill="#1e1e1e" stroke="#1e1e1e" stroke-width="0.22" textLength="9.0" lengthAdjust="spacingAndGlyphs" >38</text>
<g transform="translate(300.3,374.0)"><rect x="0.5" y="0.5" width="23" height="23.5" fill="#0ebdf6" stroke="#000" stroke-width="1.05"/><path d="M1.00 1.00L12.00 12.50M23.00 1.00L12.00 12.50M1.00 12.50L12.00 18.25M1.00 24.00L12.00 18.25" stroke="#0a1a2a" stroke-width="1.15" fill="none"/><rect x="1.00" y="11.50" width="22.00" height="2.2" fill="#000"/><rect x="11.00" y="12.50" width="2.2" height="11.50" fill="#000"/><rect x="0" y="23.5" width="24" height="1.5" fill="#000"/></g>
<text x="334.2" y="380.4" font-size="9.2" fill="#1e1e1e" stroke="#1e1e1e" stroke-width="0.22" textLength="9.0" lengthAdjust="spacingAndGlyphs" >39</text>
<g transform="translate(352.3,374.0)"><rect x="0.5" y="0.5" width="23" height="23.5" fill="#0ebdf6" stroke="#000" stroke-width="1.05"/><path d="M1.00 1.00L12.00 12.50M23.00 1.00L12.00 12.50M23.00 12.50L12.00 18.25M23.00 24.00L12.00 18.25" stroke="#0a1a2a" stroke-width="1.15" fill="none"/><rect x="1.00" y="11.50" width="22.00" height="2.2" fill="#000"/><rect x="11.00" y="12.50" width="2.2" height="11.50" fill="#000"/><rect x="0" y="23.5" width="24" height="1.5" fill="#000"/></g>
<text x="386.2" y="380.4" font-size="9.2" fill="#1e1e1e" stroke="#1e1e1e" stroke-width="0.22" textLength="9.0" lengthAdjust="spacingAndGlyphs" >40</text>
<g transform="translate(404.3,374.0)"><rect x="0.5" y="0.5" width="23" height="23.5" fill="#0ebdf6" stroke="#000" stroke-width="1.05"/><path d="M1.00 1.00L12.00 12.50M23.00 1.00L12.00 12.50M1.00 12.50L12.00 18.25M1.00 24.00L12.00 18.25M23.00 12.50L12.00 18.25M23.00 24.00L12.00 18.25" stroke="#0a1a2a" stroke-width="1.15" fill="none"/><rect x="1.00" y="11.50" width="22.00" height="2.2" fill="#000"/><rect x="11.00" y="12.50" width="2.2" height="11.50" fill="#000"/><rect x="0" y="23.5" width="24" height="1.5" fill="#000"/></g>
<text x="22.2" y="411.9" font-size="9.2" fill="#1e1e1e" stroke="#1e1e1e" stroke-width="0.22" textLength="9.0" lengthAdjust="spacingAndGlyphs" >41</text>
<g transform="translate(40.3,405.6)"><rect x="0.5" y="0.5" width="23" height="23.5" fill="#0ebdf6" stroke="#000" stroke-width="1.05"/><path d="M1.00 1.00L6.50 12.50M12.00 1.00L6.50 12.50M12.00 1.00L17.50 12.50M23.00 1.00L17.50 12.50" stroke="#0a1a2a" stroke-width="1.15" fill="none"/><rect x="1.00" y="11.50" width="22.00" height="2.2" fill="#000"/><rect x="11.00" y="1.00" width="2.2" height="11.50" fill="#000"/><rect x="0" y="23.5" width="24" height="1.5" fill="#000"/></g>
<text x="74.2" y="411.9" font-size="9.2" fill="#1e1e1e" stroke="#1e1e1e" stroke-width="0.22" textLength="9.0" lengthAdjust="spacingAndGlyphs" >42</text>
<g transform="translate(92.3,405.6)"><rect x="0.5" y="0.5" width="23" height="23.5" fill="#0ebdf6" stroke="#000" stroke-width="1.05"/><path d="M1.00 1.00L6.50 12.50M12.00 1.00L6.50 12.50M12.00 1.00L17.50 12.50M23.00 1.00L17.50 12.50M1.00 12.50L12.00 18.25M1.00 24.00L12.00 18.25M23.00 12.50L12.00 18.25M23.00 24.00L12.00 18.25" stroke="#0a1a2a" stroke-width="1.15" fill="none"/><rect x="1.00" y="11.50" width="22.00" height="2.2" fill="#000"/><rect x="11.00" y="1.00" width="2.2" height="23.00" fill="#000"/><rect x="0" y="23.5" width="24" height="1.5" fill="#000"/></g>
<text x="126.2" y="411.9" font-size="9.2" fill="#1e1e1e" stroke="#1e1e1e" stroke-width="0.22" textLength="9.0" lengthAdjust="spacingAndGlyphs" >43</text>
<g transform="translate(144.3,405.6)"><rect x="0.5" y="0.5" width="23" height="23.5" fill="#0ebdf6" stroke="#000" stroke-width="1.05"/><path d="M1.00 1.00L6.50 12.50M12.00 1.00L6.50 12.50M12.00 1.00L17.50 12.50M23.00 1.00L17.50 12.50" stroke="#0a1a2a" stroke-width="1.15" fill="none"/><rect x="1.00" y="11.50" width="22.00" height="2.2" fill="#000"/><rect x="11.00" y="1.00" width="2.2" height="23.00" fill="#000"/><rect x="0" y="23.5" width="24" height="1.5" fill="#000"/></g>
<text x="178.2" y="411.9" font-size="9.2" fill="#1e1e1e" stroke="#1e1e1e" stroke-width="0.22" textLength="9.0" lengthAdjust="spacingAndGlyphs" >44</text>
<g transform="translate(196.3,405.6)"><rect x="0.5" y="0.5" width="23" height="23.5" fill="#0ebdf6" stroke="#000" stroke-width="1.05"/><path d="M1.00 1.00L6.50 12.50M12.00 1.00L6.50 12.50M1.00 12.50L12.00 18.25M1.00 24.00L12.00 18.25" stroke="#0a1a2a" stroke-width="1.15" fill="none"/><rect x="1.00" y="11.50" width="22.00" height="2.2" fill="#000"/><rect x="11.00" y="1.00" width="2.2" height="23.00" fill="#000"/><rect x="0" y="23.5" width="24" height="1.5" fill="#000"/></g>
<text x="230.2" y="411.9" font-size="9.2" fill="#1e1e1e" stroke="#1e1e1e" stroke-width="0.22" textLength="9.0" lengthAdjust="spacingAndGlyphs" >45</text>
<g transform="translate(248.3,405.6)"><rect x="0.5" y="0.5" width="23" height="23.5" fill="#0ebdf6" stroke="#000" stroke-width="1.05"/><path d="M12.00 1.00L17.50 12.50M23.00 1.00L17.50 12.50M23.00 12.50L12.00 18.25M23.00 24.00L12.00 18.25" stroke="#0a1a2a" stroke-width="1.15" fill="none"/><rect x="1.00" y="11.50" width="22.00" height="2.2" fill="#000"/><rect x="11.00" y="1.00" width="2.2" height="23.00" fill="#000"/><rect x="0" y="23.5" width="24" height="1.5" fill="#000"/></g>
<text x="282.2" y="411.9" font-size="9.2" fill="#1e1e1e" stroke="#1e1e1e" stroke-width="0.22" textLength="9.0" lengthAdjust="spacingAndGlyphs" >46</text>
<g transform="translate(300.3,405.6)"><rect x="0.5" y="0.5" width="23" height="23.5" fill="#0ebdf6" stroke="#000" stroke-width="1.05"/><path d="M12.00 1.00L17.50 12.50M23.00 1.00L17.50 12.50M1.00 12.50L12.00 18.25M1.00 24.00L12.00 18.25" stroke="#0a1a2a" stroke-width="1.15" fill="none"/><rect x="1.00" y="11.50" width="22.00" height="2.2" fill="#000"/><rect x="11.00" y="1.00" width="2.2" height="23.00" fill="#000"/><rect x="0" y="23.5" width="24" height="1.5" fill="#000"/></g>
<text x="334.2" y="411.9" font-size="9.2" fill="#1e1e1e" stroke="#1e1e1e" stroke-width="0.22" textLength="9.0" lengthAdjust="spacingAndGlyphs" >47</text>
<g transform="translate(352.3,405.6)"><rect x="0.5" y="0.5" width="23" height="23.5" fill="#0ebdf6" stroke="#000" stroke-width="1.05"/><path d="M1.00 1.00L6.50 12.50M12.00 1.00L6.50 12.50M23.00 12.50L12.00 18.25M23.00 24.00L12.00 18.25" stroke="#0a1a2a" stroke-width="1.15" fill="none"/><rect x="1.00" y="11.50" width="22.00" height="2.2" fill="#000"/><rect x="11.00" y="1.00" width="2.2" height="23.00" fill="#000"/><rect x="0" y="23.5" width="24" height="1.5" fill="#000"/></g>
<text x="386.2" y="411.9" font-size="9.2" fill="#1e1e1e" stroke="#1e1e1e" stroke-width="0.22" textLength="9.0" lengthAdjust="spacingAndGlyphs" >48</text>
<g transform="translate(404.3,405.6)"><rect x="0.5" y="0.5" width="23" height="23.5" fill="#0ebdf6" stroke="#000" stroke-width="1.05"/><path d="M1.00 1.00L6.50 12.50M12.00 1.00L6.50 12.50" stroke="#0a1a2a" stroke-width="1.15" fill="none"/><rect x="1.00" y="11.50" width="22.00" height="2.2" fill="#000"/><rect x="11.00" y="1.00" width="2.2" height="23.00" fill="#000"/><rect x="0" y="23.5" width="24" height="1.5" fill="#000"/></g>
<text x="22.2" y="443.5" font-size="9.2" fill="#1e1e1e" stroke="#1e1e1e" stroke-width="0.22" textLength="9.0" lengthAdjust="spacingAndGlyphs" >49</text>
<g transform="translate(40.3,437.1)"><rect x="0.5" y="0.5" width="23" height="23.5" fill="#0ebdf6" stroke="#000" stroke-width="1.05"/><path d="M12.00 1.00L17.50 12.50M23.00 1.00L17.50 12.50" stroke="#0a1a2a" stroke-width="1.15" fill="none"/><rect x="1.00" y="11.50" width="22.00" height="2.2" fill="#000"/><rect x="11.00" y="1.00" width="2.2" height="23.00" fill="#000"/><rect x="0" y="23.5" width="24" height="1.5" fill="#000"/></g>
<text x="74.2" y="443.5" font-size="9.2" fill="#1e1e1e" stroke="#1e1e1e" stroke-width="0.22" textLength="9.0" lengthAdjust="spacingAndGlyphs" >50</text>
<g transform="translate(92.3,437.1)"><rect x="0.5" y="0.5" width="23" height="23.5" fill="#0ebdf6" stroke="#000" stroke-width="1.05"/><path d="M1.00 12.50L12.00 18.25M1.00 24.00L12.00 18.25" stroke="#0a1a2a" stroke-width="1.15" fill="none"/><rect x="1.00" y="11.50" width="22.00" height="2.2" fill="#000"/><rect x="11.00" y="1.00" width="2.2" height="23.00" fill="#000"/><rect x="0" y="23.5" width="24" height="1.5" fill="#000"/></g>
<text x="126.2" y="443.5" font-size="9.2" fill="#1e1e1e" stroke="#1e1e1e" stroke-width="0.22" textLength="9.0" lengthAdjust="spacingAndGlyphs" >51</text>
<g transform="translate(144.3,437.1)"><rect x="0.5" y="0.5" width="23" height="23.5" fill="#0ebdf6" stroke="#000" stroke-width="1.05"/><path d="M23.00 12.50L12.00 18.25M23.00 24.00L12.00 18.25" stroke="#0a1a2a" stroke-width="1.15" fill="none"/><rect x="1.00" y="11.50" width="22.00" height="2.2" fill="#000"/><rect x="11.00" y="1.00" width="2.2" height="23.00" fill="#000"/><rect x="0" y="23.5" width="24" height="1.5" fill="#000"/></g>
<text x="178.2" y="443.5" font-size="9.2" fill="#1e1e1e" stroke="#1e1e1e" stroke-width="0.22" textLength="9.0" lengthAdjust="spacingAndGlyphs" >52</text>
<g transform="translate(196.3,437.1)"><rect x="0.5" y="0.5" width="23" height="23.5" fill="#0ebdf6" stroke="#000" stroke-width="1.05"/><path d="M1.00 1.00L6.50 9.05M12.00 1.00L6.50 9.05M12.00 1.00L17.50 9.05M23.00 1.00L17.50 9.05" stroke="#0a1a2a" stroke-width="1.15" fill="none"/><rect x="1.00" y="7.82" width="22.00" height="2.2" fill="#000"/><rect x="1.00" y="15.41" width="22.00" height="2.2" fill="#000"/><rect x="11.00" y="1.00" width="2.2" height="23.00" fill="#000"/><rect x="0" y="23.5" width="24" height="1.5" fill="#000"/></g>
<text x="230.2" y="443.5" font-size="9.2" fill="#1e1e1e" stroke="#1e1e1e" stroke-width="0.22" textLength="9.0" lengthAdjust="spacingAndGlyphs" >53</text>
<g transform="translate(248.3,437.1)"><rect x="0.5" y="0.5" width="23" height="23.5" fill="#0ebdf6" stroke="#000" stroke-width="1.05"/><path d="M1.00 1.00L12.00 9.05M23.00 1.00L12.00 9.05" stroke="#0a1a2a" stroke-width="1.15" fill="none"/><rect x="1.00" y="8.05" width="22.00" height="2.2" fill="#000"/><rect x="1.00" y="15.64" width="22.00" height="2.2" fill="#000"/><rect x="0" y="23.5" width="24" height="1.5" fill="#000"/></g>
<text x="282.2" y="443.5" font-size="9.2" fill="#1e1e1e" stroke="#1e1e1e" stroke-width="0.22" textLength="9.0" lengthAdjust="spacingAndGlyphs" >54</text>
<g transform="translate(300.3,437.1)"><rect x="0.5" y="0.5" width="23" height="23.5" fill="#0ebdf6" stroke="#000" stroke-width="1.05"/><path d="M1.00 1.00L6.50 9.05M12.00 1.00L6.50 9.05M12.00 1.00L17.50 9.05M23.00 1.00L17.50 9.05" stroke="#0a1a2a" stroke-width="1.15" fill="none"/><rect x="1.00" y="8.05" width="22.00" height="2.2" fill="#000"/><rect x="1.00" y="15.64" width="22.00" height="2.2" fill="#000"/><rect x="11.00" y="1.00" width="2.2" height="15.64" fill="#000"/><rect x="0" y="23.5" width="24" height="1.5" fill="#000"/></g>
<text x="334.2" y="443.5" font-size="9.2" fill="#1e1e1e" stroke="#1e1e1e" stroke-width="0.22" textLength="9.0" lengthAdjust="spacingAndGlyphs" >55</text>
<g transform="translate(352.3,437.1)"><rect x="0.5" y="0.5" width="23" height="23.5" fill="#0ebdf6" stroke="#000" stroke-width="1.05"/><rect x="7.33" y="1.00" width="2.2" height="23.00" fill="#000"/><rect x="14.67" y="1.00" width="2.2" height="23.00" fill="#000"/><rect x="0" y="23.5" width="24" height="1.5" fill="#000"/></g>
<text x="386.2" y="443.5" font-size="9.2" fill="#1e1e1e" stroke="#1e1e1e" stroke-width="0.22" textLength="9.0" lengthAdjust="spacingAndGlyphs" >56</text>
<g transform="translate(404.3,437.1)"><rect x="0.5" y="0.5" width="23" height="23.5" fill="#0ebdf6" stroke="#000" stroke-width="1.05"/><rect x="7.33" y="1.00" width="2.2" height="23.00" fill="#000"/><rect x="14.67" y="1.00" width="2.2" height="23.00" fill="#000"/><rect x="1.00" y="11.50" width="22.00" height="2.2" fill="#000"/><rect x="0" y="23.5" width="24" height="1.5" fill="#000"/></g>
<text x="22.2" y="475.1" font-size="9.2" fill="#1e1e1e" stroke="#1e1e1e" stroke-width="0.22" textLength="9.0" lengthAdjust="spacingAndGlyphs" >57</text>
<g transform="translate(40.3,468.7)"><rect x="0.5" y="0.5" width="23" height="23.5" fill="#0ebdf6" stroke="#000" stroke-width="1.05"/><path d="M8.33 1.00L12.00 13.65M15.67 1.00L12.00 13.65M1.00 13.65L8.33 18.82M1.00 24.00L8.33 18.82M23.00 13.65L15.67 18.82M23.00 24.00L15.67 18.82" stroke="#0a1a2a" stroke-width="1.15" fill="none"/><rect x="7.33" y="1.00" width="2.2" height="23.00" fill="#000"/><rect x="14.67" y="1.00" width="2.2" height="23.00" fill="#000"/><rect x="1.00" y="12.65" width="22.00" height="2.2" fill="#000"/><rect x="0" y="23.5" width="24" height="1.5" fill="#000"/></g>
<text x="74.2" y="475.1" font-size="9.2" fill="#1e1e1e" stroke="#1e1e1e" stroke-width="0.22" textLength="9.0" lengthAdjust="spacingAndGlyphs" >58</text>
<g transform="translate(92.3,468.7)"><rect x="0.5" y="0.5" width="23" height="23.5" fill="#0ebdf6" stroke="#000" stroke-width="1.05"/><path d="M8.33 1.00L12.00 13.65M15.67 1.00L12.00 13.65M1.00 1.00L8.33 12.50M1.00 24.00L8.33 12.50M23.00 1.00L15.67 12.50M23.00 24.00L15.67 12.50" stroke="#0a1a2a" stroke-width="1.15" fill="none"/><rect x="7.33" y="1.00" width="2.2" height="23.00" fill="#000"/><rect x="14.67" y="1.00" width="2.2" height="23.00" fill="#000"/><rect x="8.33" y="12.65" width="7.33" height="2.2" fill="#000"/><rect x="0" y="23.5" width="24" height="1.5" fill="#000"/></g>
<text x="126.2" y="475.1" font-size="9.2" fill="#1e1e1e" stroke="#1e1e1e" stroke-width="0.22" textLength="9.0" lengthAdjust="spacingAndGlyphs" >59</text>
<g transform="translate(144.3,468.7)"><rect x="0.5" y="0.5" width="23" height="23.5" fill="#0ebdf6" stroke="#000" stroke-width="1.05"/><path d="M8.33 1.00L12.00 13.65M15.67 1.00L12.00 13.65M1.00 1.00L8.33 12.50M1.00 24.00L8.33 12.50M23.00 1.00L15.67 12.50M23.00 24.00L15.67 12.50" stroke="#0a1a2a" stroke-width="1.15" fill="none"/><rect x="7.33" y="1.00" width="2.2" height="23.00" fill="#000"/><rect x="14.67" y="1.00" width="2.2" height="23.00" fill="#000"/><rect x="8.33" y="12.65" width="7.33" height="2.2" fill="#000"/><rect x="0" y="23.5" width="24" height="1.5" fill="#000"/></g>
<text x="178.2" y="475.1" font-size="9.2" fill="#1e1e1e" stroke="#1e1e1e" stroke-width="0.22" textLength="9.0" lengthAdjust="spacingAndGlyphs" >60</text>
<g transform="translate(196.3,468.7)"><rect x="0.5" y="0.5" width="23" height="23.5" fill="#0ebdf6" stroke="#000" stroke-width="1.05"/><path d="M8.33 1.00L12.00 7.90M15.67 1.00L12.00 7.90M1.00 1.00L8.33 9.62M1.00 18.25L8.33 9.62M23.00 1.00L15.67 9.62M23.00 18.25L15.67 9.62" stroke="#0a1a2a" stroke-width="1.15" fill="none"/><rect x="7.33" y="7.90" width="2.2" height="16.10" fill="#000"/><rect x="14.67" y="7.90" width="2.2" height="16.10" fill="#000"/><rect x="8.33" y="6.90" width="7.33" height="2.2" fill="#000"/><rect x="1.00" y="17.25" width="7.33" height="2.2" fill="#000"/><rect x="15.67" y="17.25" width="7.33" height="2.2" fill="#000"/><rect x="0" y="23.5" width="24" height="1.5" fill="#000"/></g>
<text x="230.2" y="475.1" font-size="9.2" fill="#1e1e1e" stroke="#1e1e1e" stroke-width="0.22" textLength="9.0" lengthAdjust="spacingAndGlyphs" >61</text>
<g transform="translate(248.3,468.7)"><rect x="0.5" y="0.5" width="23" height="23.5" fill="#0ebdf6" stroke="#000" stroke-width="1.05"/><path d="M1.00 1.00L4.67 12.50M8.33 1.00L4.67 12.50M1.00 12.50L8.33 18.25M1.00 24.00L8.33 18.25M15.67 1.00L19.33 12.50M23.00 1.00L19.33 12.50M23.00 12.50L15.67 18.25M23.00 24.00L15.67 18.25" stroke="#0a1a2a" stroke-width="1.15" fill="none"/><rect x="7.33" y="1.00" width="2.2" height="23.00" fill="#000"/><rect x="14.67" y="1.00" width="2.2" height="23.00" fill="#000"/><rect x="1.00" y="11.50" width="7.33" height="2.2" fill="#000"/><rect x="15.67" y="11.50" width="7.33" height="2.2" fill="#000"/><rect x="0" y="23.5" width="24" height="1.5" fill="#000"/></g>
<text x="282.2" y="475.1" font-size="9.2" fill="#1e1e1e" stroke="#1e1e1e" stroke-width="0.22" textLength="9.0" lengthAdjust="spacingAndGlyphs" >62</text>
<g transform="translate(300.3,468.7)"><rect x="0.5" y="0.5" width="23" height="23.5" fill="#0ebdf6" stroke="#000" stroke-width="1.05"/><path d="M1.00 1.00L4.67 12.50M8.33 1.00L4.67 12.50M15.67 1.00L19.33 12.50M23.00 1.00L19.33 12.50M1.00 12.50L4.67 24.00M8.33 12.50L4.67 24.00M15.67 12.50L19.33 24.00M23.00 12.50L19.33 24.00" stroke="#0a1a2a" stroke-width="1.15" fill="none"/><rect x="7.33" y="1.00" width="2.2" height="23.00" fill="#000"/><rect x="14.67" y="1.00" width="2.2" height="23.00" fill="#000"/><rect x="1.00" y="11.50" width="22.00" height="2.2" fill="#000"/><rect x="0" y="23.5" width="24" height="1.5" fill="#000"/></g>
<text x="334.2" y="475.1" font-size="9.2" fill="#1e1e1e" stroke="#1e1e1e" stroke-width="0.22" textLength="9.0" lengthAdjust="spacingAndGlyphs" >63</text>
<g transform="translate(352.3,468.7)"><rect x="0.5" y="0.5" width="23" height="23.5" fill="#0ebdf6" stroke="#000" stroke-width="1.05"/><path d="M1.00 1.00L4.67 12.50M8.33 1.00L4.67 12.50M15.67 1.00L19.33 12.50M23.00 1.00L19.33 12.50M1.00 12.50L8.33 18.25M1.00 24.00L8.33 18.25M23.00 12.50L15.67 18.25M23.00 24.00L15.67 18.25" stroke="#0a1a2a" stroke-width="1.15" fill="none"/><rect x="7.33" y="1.00" width="2.2" height="23.00" fill="#000"/><rect x="14.67" y="1.00" width="2.2" height="23.00" fill="#000"/><rect x="1.00" y="11.50" width="22.00" height="2.2" fill="#000"/><rect x="0" y="23.5" width="24" height="1.5" fill="#000"/></g>
<text x="386.2" y="475.1" font-size="9.2" fill="#1e1e1e" stroke="#1e1e1e" stroke-width="0.22" textLength="9.0" lengthAdjust="spacingAndGlyphs" >64</text>
<g transform="translate(404.3,468.7)"><rect x="0.5" y="0.5" width="23" height="23.5" fill="#0ebdf6" stroke="#000" stroke-width="1.05"/><path d="M8.33 1.00L12.00 12.50M15.67 1.00L12.00 12.50" stroke="#0a1a2a" stroke-width="1.15" fill="none"/><rect x="7.33" y="1.00" width="2.2" height="23.00" fill="#000"/><rect x="14.67" y="1.00" width="2.2" height="23.00" fill="#000"/><rect x="1.00" y="11.50" width="22.00" height="2.2" fill="#000"/><rect x="0" y="23.5" width="24" height="1.5" fill="#000"/></g>
<text x="22.2" y="506.6" font-size="9.2" fill="#1e1e1e" stroke="#1e1e1e" stroke-width="0.22" textLength="9.0" lengthAdjust="spacingAndGlyphs" >65</text>
<g transform="translate(40.3,500.2)"><rect x="0.5" y="0.5" width="23" height="23.5" fill="#0ebdf6" stroke="#000" stroke-width="1.05"/><path d="M1.00 1.00L4.67 24.00M8.33 1.00L4.67 24.00M8.33 1.00L12.00 24.00M15.67 1.00L12.00 24.00M15.67 1.00L19.33 24.00M23.00 1.00L19.33 24.00" stroke="#0a1a2a" stroke-width="1.15" fill="none"/><rect x="7.73" y="1.00" width="1.2" height="23.00" fill="#000"/><rect x="15.07" y="1.00" width="1.2" height="23.00" fill="#000"/><rect x="0" y="23.5" width="24" height="1.5" fill="#000"/></g>
<text x="74.2" y="506.6" font-size="9.2" fill="#1e1e1e" stroke="#1e1e1e" stroke-width="0.22" textLength="9.0" lengthAdjust="spacingAndGlyphs" >66</text>
<g transform="translate(92.3,500.2)"><rect x="0.5" y="0.5" width="23" height="23.5" fill="#0ebdf6" stroke="#000" stroke-width="1.05"/><path d="M1.00 1.00L4.67 24.00M8.33 1.00L4.67 24.00M15.67 1.00L19.33 24.00M23.00 1.00L19.33 24.00" stroke="#0a1a2a" stroke-width="1.15" fill="none"/><rect x="7.73" y="1.00" width="1.2" height="23.00" fill="#000"/><rect x="15.07" y="1.00" width="1.2" height="23.00" fill="#000"/><rect x="0" y="23.5" width="24" height="1.5" fill="#000"/></g>
<text x="126.2" y="506.6" font-size="9.2" fill="#1e1e1e" stroke="#1e1e1e" stroke-width="0.22" textLength="9.0" lengthAdjust="spacingAndGlyphs" >67</text>
<g transform="translate(144.3,500.2)"><rect x="0.5" y="0.5" width="23" height="23.5" fill="#0ebdf6" stroke="#000" stroke-width="1.05"/><path d="M1.00 1.00L4.67 24.00M8.33 1.00L4.67 24.00M8.33 1.00L12.00 24.00M15.67 1.00L12.00 24.00M15.67 1.00L19.33 24.00M23.00 1.00L19.33 24.00" stroke="#0a1a2a" stroke-width="1.15" fill="none"/><rect x="7.73" y="1.00" width="1.2" height="23.00" fill="#000"/><rect x="15.07" y="1.00" width="1.2" height="23.00" fill="#000"/><rect x="0" y="23.5" width="24" height="1.5" fill="#000"/></g>
<text x="178.2" y="506.6" font-size="9.2" fill="#1e1e1e" stroke="#1e1e1e" stroke-width="0.22" textLength="9.0" lengthAdjust="spacingAndGlyphs" >68</text>
<g transform="translate(196.3,500.2)"><rect x="0.5" y="0.5" width="23" height="23.5" fill="#0ebdf6" stroke="#000" stroke-width="1.05"/><path d="M1.00 1.00L4.67 24.00M8.33 1.00L4.67 24.00M8.33 1.00L12.00 24.00M15.67 1.00L12.00 24.00M15.67 1.00L19.33 24.00M23.00 1.00L19.33 24.00" stroke="#0a1a2a" stroke-width="1.15" fill="none"/><rect x="7.73" y="1.00" width="1.2" height="23.00" fill="#000"/><rect x="15.07" y="1.00" width="1.2" height="23.00" fill="#000"/><rect x="0" y="23.5" width="24" height="1.5" fill="#000"/></g>
<text x="230.2" y="506.6" font-size="9.2" fill="#1e1e1e" stroke="#1e1e1e" stroke-width="0.22" textLength="9.0" lengthAdjust="spacingAndGlyphs" >69</text>
<g transform="translate(248.3,500.2)"><rect x="0.5" y="0.5" width="23" height="23.5" fill="#0ebdf6" stroke="#000" stroke-width="1.05"/><path d="M1.00 1.00L4.67 24.00M8.33 1.00L4.67 24.00M8.33 1.00L12.00 24.00M15.67 1.00L12.00 24.00M15.67 1.00L19.33 24.00M23.00 1.00L19.33 24.00" stroke="#0a1a2a" stroke-width="1.15" fill="none"/><rect x="7.73" y="1.00" width="1.2" height="23.00" fill="#000"/><rect x="15.07" y="1.00" width="1.2" height="23.00" fill="#000"/><rect x="0" y="23.5" width="24" height="1.5" fill="#000"/></g>
<text x="282.2" y="506.6" font-size="9.2" fill="#1e1e1e" stroke="#1e1e1e" stroke-width="0.22" textLength="9.0" lengthAdjust="spacingAndGlyphs" >70</text>
<g transform="translate(300.3,500.2)"><rect x="0.5" y="0.5" width="23" height="23.5" fill="#0ebdf6" stroke="#000" stroke-width="1.05"/><path d="M1.00 1.00L4.67 24.00M8.33 1.00L4.67 24.00M8.33 1.00L12.00 24.00M15.67 1.00L12.00 24.00M15.67 1.00L19.33 24.00M23.00 1.00L19.33 24.00" stroke="#0a1a2a" stroke-width="1.15" fill="none"/><rect x="7.73" y="1.00" width="1.2" height="23.00" fill="#000"/><rect x="15.07" y="1.00" width="1.2" height="23.00" fill="#000"/><rect x="0" y="23.5" width="24" height="1.5" fill="#000"/></g>
<text x="334.2" y="506.6" font-size="9.2" fill="#1e1e1e" stroke="#1e1e1e" stroke-width="0.22" textLength="9.0" lengthAdjust="spacingAndGlyphs" >71</text>
<g transform="translate(352.3,500.2)"><rect x="0.5" y="0.5" width="23" height="23.5" fill="#0ebdf6" stroke="#000" stroke-width="1.05"/><path d="M1.00 1.00L4.67 24.00M8.33 1.00L4.67 24.00M8.33 1.00L12.00 24.00M15.67 1.00L12.00 24.00M15.67 1.00L19.33 24.00M23.00 1.00L19.33 24.00" stroke="#0a1a2a" stroke-width="1.15" fill="none"/><rect x="7.73" y="1.00" width="1.2" height="23.00" fill="#000"/><rect x="15.07" y="1.00" width="1.2" height="23.00" fill="#000"/><rect x="0" y="23.5" width="24" height="1.5" fill="#000"/></g>
<text x="386.2" y="506.6" font-size="9.2" fill="#1e1e1e" stroke="#1e1e1e" stroke-width="0.22" textLength="9.0" lengthAdjust="spacingAndGlyphs" >72</text>
<g transform="translate(404.3,500.2)"><rect x="0.5" y="0.5" width="23" height="23.5" fill="#0ebdf6" stroke="#000" stroke-width="1.05"/><path d="M1.00 1.00L3.75 24.00M6.50 1.00L3.75 24.00M6.50 1.00L9.25 24.00M12.00 1.00L9.25 24.00M12.00 1.00L14.75 24.00M17.50 1.00L14.75 24.00M17.50 1.00L20.25 24.00M23.00 1.00L20.25 24.00" stroke="#0a1a2a" stroke-width="1.15" fill="none"/><rect x="5.90" y="1.00" width="1.2" height="23.00" fill="#000"/><rect x="11.40" y="1.00" width="1.2" height="23.00" fill="#000"/><rect x="16.90" y="1.00" width="1.2" height="23.00" fill="#000"/><rect x="0" y="23.5" width="24" height="1.5" fill="#000"/></g>
<rect x="70" y="244" width="1" height="266" fill="#c8c8c8" />
<rect x="122" y="244" width="1" height="266" fill="#c8c8c8" />
<rect x="174" y="244" width="1" height="266" fill="#c8c8c8" />
<rect x="226" y="244" width="1" height="266" fill="#c8c8c8" />
<rect x="278" y="244" width="1" height="266" fill="#c8c8c8" />
<rect x="330" y="244" width="1" height="266" fill="#c8c8c8" />
<rect x="382" y="244" width="1" height="266" fill="#c8c8c8" />
<rect x="18" y="276" width="416" height="1" fill="#c8c8c8" />
<rect x="18" y="307" width="416" height="1" fill="#c8c8c8" />
<rect x="18" y="339" width="416" height="1" fill="#c8c8c8" />
<rect x="18" y="370" width="416" height="1" fill="#c8c8c8" />
<rect x="18" y="402" width="416" height="1" fill="#c8c8c8" />
<rect x="18" y="433" width="416" height="1" fill="#c8c8c8" />
<rect x="18" y="465" width="416" height="1" fill="#c8c8c8" />
<rect x="18" y="496" width="416" height="1" fill="#c8c8c8" />
</g>
<rect x="17.5" y="509" width="434.5" height="1" fill="#c8c8c8" />
<rect x="19" y="339.65" width="50.5" height="30" fill="none" stroke="#000" stroke-width="2"/>
<rect x="433.5" y="244.5" width="17.5" height="264.5" fill="#f0f0f0" />
<path d="M439 252L442.5 248.5L446 252" fill="none" stroke="#333" stroke-width="1.4"/>
<rect x="440" y="257" width="10" height="11" fill="#cdcdcd" />
<path d="M439 502L442.5 505.5L446 502" fill="none" stroke="#333" stroke-width="1.4"/>
<rect x="17.3" y="515.7" width="43.2" height="13.8" fill="#5a5a5a" />
<rect x="17.3" y="515.7" width="41.7" height="12.3" fill="#ffffff" />
<rect x="18.3" y="516.7" width="40.7" height="11.3" fill="#f0f0f0" />
<rect x="17.8" y="516.2" width="42.2" height="12.8" fill="none" stroke="#3a3a3a"/>
<text x="33.5" y="525.7" font-size="8.7" fill="#1a1a1a" stroke="#1a1a1a" stroke-width="0.22" textLength="11.2" lengthAdjust="spacingAndGlyphs" >OK</text>
<rect x="34" y="527.5" width="6" height="0.8" fill="#222" />
<rect x="65.7" y="515.7" width="44" height="13.8" fill="#5a5a5a" />
<rect x="65.7" y="515.7" width="42.5" height="12.3" fill="#ffffff" />
<rect x="66.7" y="516.7" width="41.5" height="11.3" fill="#f0f0f0" />
<text x="78.2" y="525.7" font-size="8.7" fill="#1a1a1a" stroke="#1a1a1a" stroke-width="0.22" textLength="19" lengthAdjust="spacingAndGlyphs" >Apply</text>
<rect x="114.1" y="515.7" width="44" height="13.8" fill="#5a5a5a" />
<rect x="114.1" y="515.7" width="42.5" height="12.3" fill="#ffffff" />
<rect x="115.1" y="516.7" width="41.5" height="11.3" fill="#f0f0f0" />
<text x="126.7" y="525.7" font-size="8.7" fill="#1a1a1a" stroke="#1a1a1a" stroke-width="0.22" textLength="18.9" lengthAdjust="spacingAndGlyphs" >Close</text>
<rect x="78.3" y="527.6" width="5" height="0.8" fill="#222" />
<rect x="126.8" y="527.6" width="5" height="0.8" fill="#222" />
</svg></body></html>
